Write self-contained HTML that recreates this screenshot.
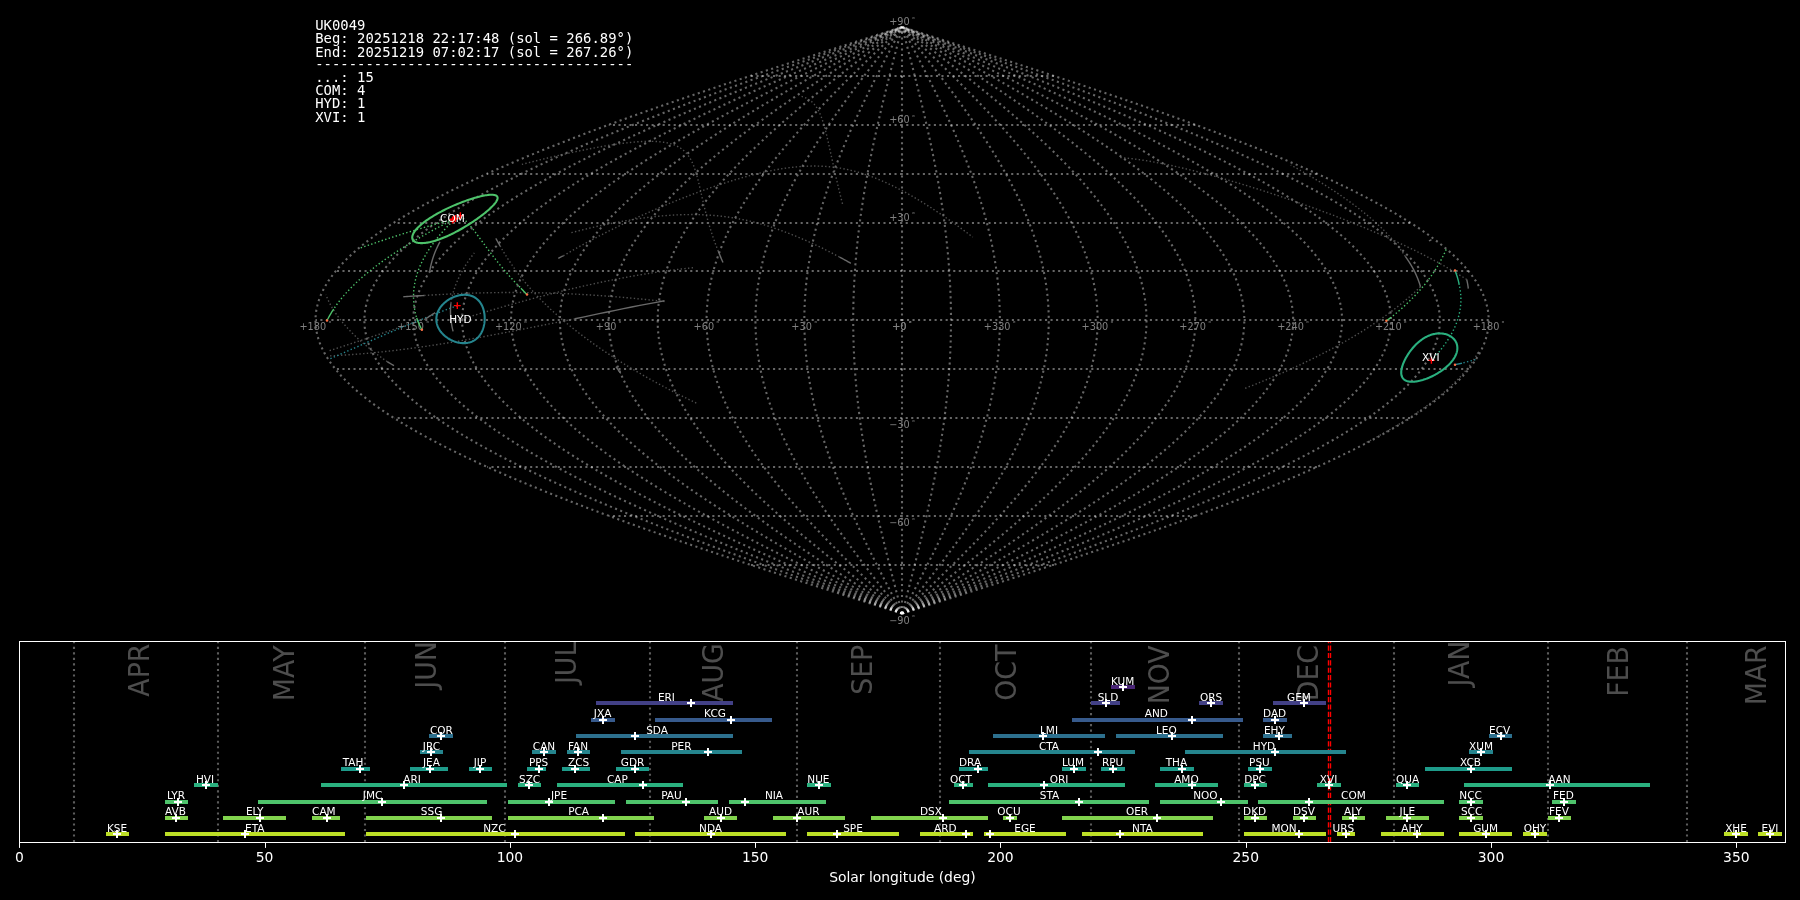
<!DOCTYPE html>
<html lang="en"><head><meta charset="utf-8"><title>UK0049 shower association</title>
<style>
html,body{margin:0;padding:0;background:#000;}
body{width:1800px;height:900px;overflow:hidden;}
svg{display:block;}
text{font-family:"DejaVu Sans","Liberation Sans",sans-serif;}
.mono{font-family:"DejaVu Sans Mono","Liberation Mono",monospace;font-size:13.89px;fill:#fff;white-space:pre;letter-spacing:.019px;}
.grid{fill:none;stroke:#fff;stroke-opacity:.4;stroke-width:2.083;stroke-dasharray:2.083 3.4375;}
.gl{font-size:9.72px;fill:#808080;text-anchor:middle;}
.gc{fill:none;stroke-width:1.389;stroke-dasharray:1.389 2.292;}
.met{fill:none;stroke-width:1.389;}
.sl{font-size:10.5px;fill:#fff;text-anchor:middle;}
.bl{font-size:10.5px;fill:#fff;text-anchor:middle;}
.bar{fill:none;stroke-width:4;}
.pk{fill:none;stroke:#fff;stroke-width:2;}
.mon{font-size:27.78px;fill:#fff;fill-opacity:.3;}
.ml{fill:none;stroke:#fff;stroke-opacity:.36;stroke-width:2.083;stroke-dasharray:2.083 3.4375;}
.tk{font-size:13.89px;fill:#fff;text-anchor:middle;}
</style></head><body>
<svg width="1800" height="900" viewBox="0 0 1800 900" style="will-change:transform">
<rect width="1800" height="900" fill="#000"/>
<g class="grid">
<path d="M902.1 565H750.27"/>
<path d="M1053.93 565H902.1"/>
<path d="M902.1 516H608.79"/>
<path d="M1195.41 516H902.1"/>
<path d="M902.1 467H487.3"/>
<path d="M1316.9 467H902.1"/>
<path d="M902.1 418H394.07"/>
<path d="M1410.13 418H902.1"/>
<path d="M902.1 369H335.47"/>
<path d="M1468.73 369H902.1"/>
<path d="M902.1 320H315.48"/>
<path d="M1488.72 320H902.1"/>
<path d="M902.1 271H335.47"/>
<path d="M1468.73 271H902.1"/>
<path d="M902.1 223H394.07"/>
<path d="M1410.13 223H902.1"/>
<path d="M902.1 174H487.3"/>
<path d="M1316.9 174H902.1"/>
<path d="M902.1 125H608.79"/>
<path d="M1195.41 125H902.1"/>
<path d="M902.1 76H750.27"/>
<path d="M1053.93 76H902.1"/>
<path d="M902 613.61V26.99"/>
<path d="M902.1 613.61 L901.25 610.35 L900.39 607.09 L899.54 603.83 L898.69 600.57 L897.84 597.32 L896.99 594.06 L896.14 590.8 L895.3 587.54 L894.45 584.28 L893.61 581.02 L892.77 577.76 L891.94 574.5 L891.1 571.24 L890.27 567.98 L889.45 564.73 L888.63 561.47 L887.81 558.21 L886.99 554.95 L886.18 551.69 L885.38 548.43 L884.58 545.17 L883.79 541.91 L883 538.65 L882.22 535.39 L881.44 532.13 L880.67 528.88 L879.91 525.62 L879.15 522.36 L878.4 519.1 L877.66 515.84 L876.92 512.58 L876.19 509.32 L875.48 506.06 L874.76 502.8 L874.06 499.55 L873.37 496.29 L872.68 493.03 L872 489.77 L871.34 486.51 L870.68 483.25 L870.03 479.99 L869.39 476.73 L868.76 473.47 L868.14 470.21 L867.53 466.96 L866.94 463.7 L866.35 460.44 L865.77 457.18 L865.21 453.92 L864.65 450.66 L864.11 447.4 L863.58 444.14 L863.06 440.88 L862.55 437.62 L862.06 434.37 L861.57 431.11 L861.1 427.85 L860.64 424.59 L860.2 421.33 L859.76 418.07 L859.34 414.81 L858.94 411.55 L858.54 408.29 L858.16 405.03 L857.8 401.77 L857.44 398.52 L857.1 395.26 L856.77 392 L856.46 388.74 L856.16 385.48 L855.88 382.22 L855.61 378.96 L855.35 375.7 L855.11 372.44 L854.88 369.19 L854.67 365.93 L854.47 362.67 L854.28 359.41 L854.11 356.15 L853.96 352.89 L853.82 349.63 L853.69 346.37 L853.58 343.11 L853.48 339.85 L853.4 336.6 L853.33 333.34 L853.28 330.08 L853.24 326.82 L853.22 323.56 L853.22 320.3 L853.22 317.04 L853.24 313.78 L853.28 310.52 L853.33 307.26 L853.4 304 L853.48 300.75 L853.58 297.49 L853.69 294.23 L853.82 290.97 L853.96 287.71 L854.11 284.45 L854.28 281.19 L854.47 277.93 L854.67 274.67 L854.88 271.42 L855.11 268.16 L855.35 264.9 L855.61 261.64 L855.88 258.38 L856.16 255.12 L856.46 251.86 L856.77 248.6 L857.1 245.34 L857.44 242.08 L857.8 238.83 L858.16 235.57 L858.54 232.31 L858.94 229.05 L859.34 225.79 L859.76 222.53 L860.2 219.27 L860.64 216.01 L861.1 212.75 L861.57 209.49 L862.06 206.24 L862.55 202.98 L863.06 199.72 L863.58 196.46 L864.11 193.2 L864.65 189.94 L865.21 186.68 L865.77 183.42 L866.35 180.16 L866.94 176.9 L867.53 173.65 L868.14 170.39 L868.76 167.13 L869.39 163.87 L870.03 160.61 L870.68 157.35 L871.34 154.09 L872 150.83 L872.68 147.57 L873.37 144.31 L874.06 141.06 L874.76 137.8 L875.48 134.54 L876.19 131.28 L876.92 128.02 L877.66 124.76 L878.4 121.5 L879.15 118.24 L879.91 114.98 L880.67 111.72 L881.44 108.47 L882.22 105.21 L883 101.95 L883.79 98.69 L884.58 95.43 L885.38 92.17 L886.18 88.91 L886.99 85.65 L887.81 82.39 L888.63 79.13 L889.45 75.88 L890.27 72.62 L891.1 69.36 L891.94 66.1 L892.77 62.84 L893.61 59.58 L894.45 56.32 L895.3 53.06 L896.14 49.8 L896.99 46.54 L897.84 43.29 L898.69 40.03 L899.54 36.77 L900.39 33.51 L901.25 30.25 L902.1 26.99"/>
<path d="M902.1 613.61 L900.39 610.35 L898.69 607.09 L896.98 603.83 L895.28 600.57 L893.58 597.32 L891.88 594.06 L890.18 590.8 L888.49 587.54 L886.81 584.28 L885.12 581.02 L883.44 577.76 L881.77 574.5 L880.11 571.24 L878.45 567.98 L876.8 564.73 L875.15 561.47 L873.51 558.21 L871.89 554.95 L870.27 551.69 L868.66 548.43 L867.06 545.17 L865.47 541.91 L863.9 538.65 L862.33 535.39 L860.78 532.13 L859.24 528.88 L857.71 525.62 L856.2 522.36 L854.7 519.1 L853.22 515.84 L851.74 512.58 L850.29 509.32 L848.85 506.06 L847.43 502.8 L846.02 499.55 L844.63 496.29 L843.26 493.03 L841.91 489.77 L840.57 486.51 L839.25 483.25 L837.96 479.99 L836.68 476.73 L835.42 473.47 L834.18 470.21 L832.97 466.96 L831.77 463.7 L830.6 460.44 L829.44 457.18 L828.31 453.92 L827.2 450.66 L826.12 447.4 L825.06 444.14 L824.02 440.88 L823 437.62 L822.01 434.37 L821.04 431.11 L820.1 427.85 L819.19 424.59 L818.29 421.33 L817.43 418.07 L816.59 414.81 L815.77 411.55 L814.99 408.29 L814.22 405.03 L813.49 401.77 L812.78 398.52 L812.1 395.26 L811.45 392 L810.82 388.74 L810.23 385.48 L809.66 382.22 L809.12 378.96 L808.6 375.7 L808.12 372.44 L807.66 369.19 L807.23 365.93 L806.84 362.67 L806.47 359.41 L806.13 356.15 L805.82 352.89 L805.53 349.63 L805.28 346.37 L805.06 343.11 L804.87 339.85 L804.7 336.6 L804.57 333.34 L804.46 330.08 L804.39 326.82 L804.34 323.56 L804.33 320.3 L804.34 317.04 L804.39 313.78 L804.46 310.52 L804.57 307.26 L804.7 304 L804.87 300.75 L805.06 297.49 L805.28 294.23 L805.53 290.97 L805.82 287.71 L806.13 284.45 L806.47 281.19 L806.84 277.93 L807.23 274.67 L807.66 271.42 L808.12 268.16 L808.6 264.9 L809.12 261.64 L809.66 258.38 L810.23 255.12 L810.82 251.86 L811.45 248.6 L812.1 245.34 L812.78 242.08 L813.49 238.83 L814.22 235.57 L814.99 232.31 L815.77 229.05 L816.59 225.79 L817.43 222.53 L818.29 219.27 L819.19 216.01 L820.1 212.75 L821.04 209.49 L822.01 206.24 L823 202.98 L824.02 199.72 L825.06 196.46 L826.12 193.2 L827.2 189.94 L828.31 186.68 L829.44 183.42 L830.6 180.16 L831.77 176.9 L832.97 173.65 L834.18 170.39 L835.42 167.13 L836.68 163.87 L837.96 160.61 L839.25 157.35 L840.57 154.09 L841.91 150.83 L843.26 147.57 L844.63 144.31 L846.02 141.06 L847.43 137.8 L848.85 134.54 L850.29 131.28 L851.74 128.02 L853.22 124.76 L854.7 121.5 L856.2 118.24 L857.71 114.98 L859.24 111.72 L860.78 108.47 L862.33 105.21 L863.9 101.95 L865.47 98.69 L867.06 95.43 L868.66 92.17 L870.27 88.91 L871.89 85.65 L873.51 82.39 L875.15 79.13 L876.8 75.88 L878.45 72.62 L880.11 69.36 L881.77 66.1 L883.44 62.84 L885.12 59.58 L886.81 56.32 L888.49 53.06 L890.18 49.8 L891.88 46.54 L893.58 43.29 L895.28 40.03 L896.98 36.77 L898.69 33.51 L900.39 30.25 L902.1 26.99"/>
<path d="M902.1 613.61 L899.54 610.35 L896.98 607.09 L894.42 603.83 L891.87 600.57 L889.32 597.32 L886.77 594.06 L884.23 590.8 L881.69 587.54 L879.16 584.28 L876.63 581.02 L874.12 577.76 L871.61 574.5 L869.11 571.24 L866.62 567.98 L864.14 564.73 L861.68 561.47 L859.22 558.21 L856.78 554.95 L854.35 551.69 L851.94 548.43 L849.54 545.17 L847.16 541.91 L844.8 538.65 L842.45 535.39 L840.12 532.13 L837.81 528.88 L835.52 525.62 L833.25 522.36 L831 519.1 L828.77 515.84 L826.57 512.58 L824.38 509.32 L822.23 506.06 L820.09 502.8 L817.98 499.55 L815.9 496.29 L813.84 493.03 L811.81 489.77 L809.81 486.51 L807.83 483.25 L805.89 479.99 L803.97 476.73 L802.08 473.47 L800.22 470.21 L798.4 466.96 L796.61 463.7 L794.84 460.44 L793.11 457.18 L791.42 453.92 L789.76 450.66 L788.13 447.4 L786.53 444.14 L784.98 440.88 L783.45 437.62 L781.97 434.37 L780.52 431.11 L779.1 427.85 L777.73 424.59 L776.39 421.33 L775.09 418.07 L773.83 414.81 L772.61 411.55 L771.43 408.29 L770.29 405.03 L769.19 401.77 L768.12 398.52 L767.1 395.26 L766.12 392 L765.19 388.74 L764.29 385.48 L763.43 382.22 L762.62 378.96 L761.85 375.7 L761.13 372.44 L760.44 369.19 L759.8 365.93 L759.2 362.67 L758.65 359.41 L758.14 356.15 L757.67 352.89 L757.25 349.63 L756.87 346.37 L756.54 343.11 L756.25 339.85 L756 336.6 L755.8 333.34 L755.65 330.08 L755.53 326.82 L755.47 323.56 L755.45 320.3 L755.47 317.04 L755.53 313.78 L755.65 310.52 L755.8 307.26 L756 304 L756.25 300.75 L756.54 297.49 L756.87 294.23 L757.25 290.97 L757.67 287.71 L758.14 284.45 L758.65 281.19 L759.2 277.93 L759.8 274.67 L760.44 271.42 L761.13 268.16 L761.85 264.9 L762.62 261.64 L763.43 258.38 L764.29 255.12 L765.19 251.86 L766.12 248.6 L767.1 245.34 L768.12 242.08 L769.19 238.83 L770.29 235.57 L771.43 232.31 L772.61 229.05 L773.83 225.79 L775.09 222.53 L776.39 219.27 L777.73 216.01 L779.1 212.75 L780.52 209.49 L781.97 206.24 L783.45 202.98 L784.98 199.72 L786.53 196.46 L788.13 193.2 L789.76 189.94 L791.42 186.68 L793.11 183.42 L794.84 180.16 L796.61 176.9 L798.4 173.65 L800.22 170.39 L802.08 167.13 L803.97 163.87 L805.89 160.61 L807.83 157.35 L809.81 154.09 L811.81 150.83 L813.84 147.57 L815.9 144.31 L817.98 141.06 L820.09 137.8 L822.23 134.54 L824.38 131.28 L826.57 128.02 L828.77 124.76 L831 121.5 L833.25 118.24 L835.52 114.98 L837.81 111.72 L840.12 108.47 L842.45 105.21 L844.8 101.95 L847.16 98.69 L849.54 95.43 L851.94 92.17 L854.35 88.91 L856.78 85.65 L859.22 82.39 L861.68 79.13 L864.14 75.88 L866.62 72.62 L869.11 69.36 L871.61 66.1 L874.12 62.84 L876.63 59.58 L879.16 56.32 L881.69 53.06 L884.23 49.8 L886.77 46.54 L889.32 43.29 L891.87 40.03 L894.42 36.77 L896.98 33.51 L899.54 30.25 L902.1 26.99"/>
<path d="M902.1 613.61 L898.69 610.35 L895.28 607.09 L891.87 603.83 L888.46 600.57 L885.06 597.32 L881.66 594.06 L878.27 590.8 L874.89 587.54 L871.51 584.28 L868.14 581.02 L864.79 577.76 L861.44 574.5 L858.11 571.24 L854.79 567.98 L851.49 564.73 L848.2 561.47 L844.93 558.21 L841.67 554.95 L838.44 551.69 L835.22 548.43 L832.02 545.17 L828.85 541.91 L825.7 538.65 L822.57 535.39 L819.46 532.13 L816.38 528.88 L813.33 525.62 L810.3 522.36 L807.3 519.1 L804.33 515.84 L801.39 512.58 L798.48 509.32 L795.6 506.06 L792.76 502.8 L789.94 499.55 L787.16 496.29 L784.42 493.03 L781.71 489.77 L779.04 486.51 L776.41 483.25 L773.81 479.99 L771.26 476.73 L768.74 473.47 L766.27 470.21 L763.83 466.96 L761.44 463.7 L759.09 460.44 L756.79 457.18 L754.52 453.92 L752.31 450.66 L750.14 447.4 L748.01 444.14 L745.93 440.88 L743.9 437.62 L741.92 434.37 L739.99 431.11 L738.11 427.85 L736.27 424.59 L734.49 421.33 L732.76 418.07 L731.08 414.81 L729.45 411.55 L727.87 408.29 L726.35 405.03 L724.88 401.77 L723.47 398.52 L722.1 395.26 L720.8 392 L719.55 388.74 L718.35 385.48 L717.21 382.22 L716.13 378.96 L715.1 375.7 L714.13 372.44 L713.22 369.19 L712.37 365.93 L711.57 362.67 L710.83 359.41 L710.15 356.15 L709.53 352.89 L708.97 349.63 L708.46 346.37 L708.02 343.11 L707.63 339.85 L707.3 336.6 L707.04 333.34 L706.83 330.08 L706.68 326.82 L706.59 323.56 L706.56 320.3 L706.59 317.04 L706.68 313.78 L706.83 310.52 L707.04 307.26 L707.3 304 L707.63 300.75 L708.02 297.49 L708.46 294.23 L708.97 290.97 L709.53 287.71 L710.15 284.45 L710.83 281.19 L711.57 277.93 L712.37 274.67 L713.22 271.42 L714.13 268.16 L715.1 264.9 L716.13 261.64 L717.21 258.38 L718.35 255.12 L719.55 251.86 L720.8 248.6 L722.1 245.34 L723.47 242.08 L724.88 238.83 L726.35 235.57 L727.87 232.31 L729.45 229.05 L731.08 225.79 L732.76 222.53 L734.49 219.27 L736.27 216.01 L738.11 212.75 L739.99 209.49 L741.92 206.24 L743.9 202.98 L745.93 199.72 L748.01 196.46 L750.14 193.2 L752.31 189.94 L754.52 186.68 L756.79 183.42 L759.09 180.16 L761.44 176.9 L763.83 173.65 L766.27 170.39 L768.74 167.13 L771.26 163.87 L773.81 160.61 L776.41 157.35 L779.04 154.09 L781.71 150.83 L784.42 147.57 L787.16 144.31 L789.94 141.06 L792.76 137.8 L795.6 134.54 L798.48 131.28 L801.39 128.02 L804.33 124.76 L807.3 121.5 L810.3 118.24 L813.33 114.98 L816.38 111.72 L819.46 108.47 L822.57 105.21 L825.7 101.95 L828.85 98.69 L832.02 95.43 L835.22 92.17 L838.44 88.91 L841.67 85.65 L844.93 82.39 L848.2 79.13 L851.49 75.88 L854.79 72.62 L858.11 69.36 L861.44 66.1 L864.79 62.84 L868.14 59.58 L871.51 56.32 L874.89 53.06 L878.27 49.8 L881.66 46.54 L885.06 43.29 L888.46 40.03 L891.87 36.77 L895.28 33.51 L898.69 30.25 L902.1 26.99"/>
<path d="M902.1 613.61 L897.83 610.35 L893.57 607.09 L889.31 603.83 L885.05 600.57 L880.8 597.32 L876.55 594.06 L872.31 590.8 L868.08 587.54 L863.86 584.28 L859.66 581.02 L855.46 577.76 L851.28 574.5 L847.12 571.24 L842.97 567.98 L838.84 564.73 L834.73 561.47 L830.64 558.21 L826.57 554.95 L822.52 551.69 L818.5 548.43 L814.51 545.17 L810.54 541.91 L806.6 538.65 L802.68 535.39 L798.8 532.13 L794.95 528.88 L791.13 525.62 L787.35 522.36 L783.6 519.1 L779.89 515.84 L776.21 512.58 L772.57 509.32 L768.98 506.06 L765.42 502.8 L761.9 499.55 L758.43 496.29 L755 493.03 L751.62 489.77 L748.28 486.51 L744.99 483.25 L741.74 479.99 L738.55 476.73 L735.4 473.47 L732.31 470.21 L729.27 466.96 L726.28 463.7 L723.34 460.44 L720.46 457.18 L717.63 453.92 L714.86 450.66 L712.15 447.4 L709.49 444.14 L706.89 440.88 L704.36 437.62 L701.88 434.37 L699.46 431.11 L697.11 427.85 L694.82 424.59 L692.59 421.33 L690.42 418.07 L688.32 414.81 L686.29 411.55 L684.32 408.29 L682.41 405.03 L680.58 401.77 L678.81 398.52 L677.11 395.26 L675.47 392 L673.91 388.74 L672.42 385.48 L670.99 382.22 L669.64 378.96 L668.36 375.7 L667.14 372.44 L666 369.19 L664.94 365.93 L663.94 362.67 L663.02 359.41 L662.17 356.15 L661.39 352.89 L660.68 349.63 L660.05 346.37 L659.5 343.11 L659.01 339.85 L658.61 336.6 L658.27 333.34 L658.01 330.08 L657.82 326.82 L657.71 323.56 L657.68 320.3 L657.71 317.04 L657.82 313.78 L658.01 310.52 L658.27 307.26 L658.61 304 L659.01 300.75 L659.5 297.49 L660.05 294.23 L660.68 290.97 L661.39 287.71 L662.17 284.45 L663.02 281.19 L663.94 277.93 L664.94 274.67 L666 271.42 L667.14 268.16 L668.36 264.9 L669.64 261.64 L670.99 258.38 L672.42 255.12 L673.91 251.86 L675.47 248.6 L677.11 245.34 L678.81 242.08 L680.58 238.83 L682.41 235.57 L684.32 232.31 L686.29 229.05 L688.32 225.79 L690.42 222.53 L692.59 219.27 L694.82 216.01 L697.11 212.75 L699.46 209.49 L701.88 206.24 L704.36 202.98 L706.89 199.72 L709.49 196.46 L712.15 193.2 L714.86 189.94 L717.63 186.68 L720.46 183.42 L723.34 180.16 L726.28 176.9 L729.27 173.65 L732.31 170.39 L735.4 167.13 L738.55 163.87 L741.74 160.61 L744.99 157.35 L748.28 154.09 L751.62 150.83 L755 147.57 L758.43 144.31 L761.9 141.06 L765.42 137.8 L768.98 134.54 L772.57 131.28 L776.21 128.02 L779.89 124.76 L783.6 121.5 L787.35 118.24 L791.13 114.98 L794.95 111.72 L798.8 108.47 L802.68 105.21 L806.6 101.95 L810.54 98.69 L814.51 95.43 L818.5 92.17 L822.52 88.91 L826.57 85.65 L830.64 82.39 L834.73 79.13 L838.84 75.88 L842.97 72.62 L847.12 69.36 L851.28 66.1 L855.46 62.84 L859.66 59.58 L863.86 56.32 L868.08 53.06 L872.31 49.8 L876.55 46.54 L880.8 43.29 L885.05 40.03 L889.31 36.77 L893.57 33.51 L897.83 30.25 L902.1 26.99"/>
<path d="M902.1 613.61 L896.98 610.35 L891.86 607.09 L886.75 603.83 L881.64 600.57 L876.54 597.32 L871.44 594.06 L866.35 590.8 L861.28 587.54 L856.22 584.28 L851.17 581.02 L846.13 577.76 L841.12 574.5 L836.12 571.24 L831.14 567.98 L826.19 564.73 L821.25 561.47 L816.34 558.21 L811.46 554.95 L806.61 551.69 L801.78 548.43 L796.99 545.17 L792.22 541.91 L787.49 538.65 L782.8 535.39 L778.14 532.13 L773.52 528.88 L768.94 525.62 L764.4 522.36 L759.9 519.1 L755.44 515.84 L751.03 512.58 L746.67 509.32 L742.35 506.06 L738.08 502.8 L733.86 499.55 L729.7 496.29 L725.58 493.03 L721.52 489.77 L717.51 486.51 L713.56 483.25 L709.67 479.99 L705.84 476.73 L702.06 473.47 L698.35 470.21 L694.7 466.96 L691.11 463.7 L687.59 460.44 L684.13 457.18 L680.74 453.92 L677.41 450.66 L674.16 447.4 L670.97 444.14 L667.85 440.88 L664.81 437.62 L661.83 434.37 L658.93 431.11 L656.11 427.85 L653.36 424.59 L650.68 421.33 L648.09 418.07 L645.57 414.81 L643.12 411.55 L640.76 408.29 L638.47 405.03 L636.27 401.77 L634.15 398.52 L632.11 395.26 L630.15 392 L628.27 388.74 L626.48 385.48 L624.77 382.22 L623.15 378.96 L621.61 375.7 L620.15 372.44 L618.78 369.19 L617.5 365.93 L616.31 362.67 L615.2 359.41 L614.18 356.15 L613.25 352.89 L612.4 349.63 L611.64 346.37 L610.98 343.11 L610.4 339.85 L609.91 336.6 L609.5 333.34 L609.19 330.08 L608.97 326.82 L608.83 323.56 L608.79 320.3 L608.83 317.04 L608.97 313.78 L609.19 310.52 L609.5 307.26 L609.91 304 L610.4 300.75 L610.98 297.49 L611.64 294.23 L612.4 290.97 L613.25 287.71 L614.18 284.45 L615.2 281.19 L616.31 277.93 L617.5 274.67 L618.78 271.42 L620.15 268.16 L621.61 264.9 L623.15 261.64 L624.77 258.38 L626.48 255.12 L628.27 251.86 L630.15 248.6 L632.11 245.34 L634.15 242.08 L636.27 238.83 L638.47 235.57 L640.76 232.31 L643.12 229.05 L645.57 225.79 L648.09 222.53 L650.68 219.27 L653.36 216.01 L656.11 212.75 L658.93 209.49 L661.83 206.24 L664.81 202.98 L667.85 199.72 L670.97 196.46 L674.16 193.2 L677.41 189.94 L680.74 186.68 L684.13 183.42 L687.59 180.16 L691.11 176.9 L694.7 173.65 L698.35 170.39 L702.06 167.13 L705.84 163.87 L709.67 160.61 L713.56 157.35 L717.51 154.09 L721.52 150.83 L725.58 147.57 L729.7 144.31 L733.86 141.06 L738.08 137.8 L742.35 134.54 L746.67 131.28 L751.03 128.02 L755.44 124.76 L759.9 121.5 L764.4 118.24 L768.94 114.98 L773.52 111.72 L778.14 108.47 L782.8 105.21 L787.49 101.95 L792.22 98.69 L796.99 95.43 L801.78 92.17 L806.61 88.91 L811.46 85.65 L816.34 82.39 L821.25 79.13 L826.19 75.88 L831.14 72.62 L836.12 69.36 L841.12 66.1 L846.13 62.84 L851.17 59.58 L856.22 56.32 L861.28 53.06 L866.35 49.8 L871.44 46.54 L876.54 43.29 L881.64 40.03 L886.75 36.77 L891.86 33.51 L896.98 30.25 L902.1 26.99"/>
<path d="M902.1 613.61 L896.13 610.35 L890.16 607.09 L884.19 603.83 L878.23 600.57 L872.28 597.32 L866.33 594.06 L860.4 590.8 L854.48 587.54 L848.57 584.28 L842.68 581.02 L836.81 577.76 L830.95 574.5 L825.12 571.24 L819.32 567.98 L813.53 564.73 L807.78 561.47 L802.05 558.21 L796.36 554.95 L790.69 551.69 L785.06 548.43 L779.47 545.17 L773.91 541.91 L768.39 538.65 L762.92 535.39 L757.48 532.13 L752.09 528.88 L746.75 525.62 L741.45 522.36 L736.2 519.1 L731 515.84 L725.86 512.58 L720.76 509.32 L715.73 506.06 L710.75 502.8 L705.83 499.55 L700.96 496.29 L696.16 493.03 L691.42 489.77 L686.75 486.51 L682.14 483.25 L677.6 479.99 L673.13 476.73 L668.72 473.47 L664.39 470.21 L660.13 466.96 L655.95 463.7 L651.83 460.44 L647.8 457.18 L643.84 453.92 L639.96 450.66 L636.16 447.4 L632.45 444.14 L628.81 440.88 L625.26 437.62 L621.79 434.37 L618.41 431.11 L615.11 427.85 L611.9 424.59 L608.78 421.33 L605.75 418.07 L602.81 414.81 L599.96 411.55 L597.2 408.29 L594.54 405.03 L591.97 401.77 L589.49 398.52 L587.11 395.26 L584.82 392 L582.63 388.74 L580.54 385.48 L578.55 382.22 L576.65 378.96 L574.86 375.7 L573.16 372.44 L571.57 369.19 L570.07 365.93 L568.68 362.67 L567.38 359.41 L566.19 356.15 L565.1 352.89 L564.12 349.63 L563.24 346.37 L562.46 343.11 L561.78 339.85 L561.21 336.6 L560.74 333.34 L560.37 330.08 L560.11 326.82 L559.96 323.56 L559.9 320.3 L559.96 317.04 L560.11 313.78 L560.37 310.52 L560.74 307.26 L561.21 304 L561.78 300.75 L562.46 297.49 L563.24 294.23 L564.12 290.97 L565.1 287.71 L566.19 284.45 L567.38 281.19 L568.68 277.93 L570.07 274.67 L571.57 271.42 L573.16 268.16 L574.86 264.9 L576.65 261.64 L578.55 258.38 L580.54 255.12 L582.63 251.86 L584.82 248.6 L587.11 245.34 L589.49 242.08 L591.97 238.83 L594.54 235.57 L597.2 232.31 L599.96 229.05 L602.81 225.79 L605.75 222.53 L608.78 219.27 L611.9 216.01 L615.11 212.75 L618.41 209.49 L621.79 206.24 L625.26 202.98 L628.81 199.72 L632.45 196.46 L636.16 193.2 L639.96 189.94 L643.84 186.68 L647.8 183.42 L651.83 180.16 L655.95 176.9 L660.13 173.65 L664.39 170.39 L668.72 167.13 L673.13 163.87 L677.6 160.61 L682.14 157.35 L686.75 154.09 L691.42 150.83 L696.16 147.57 L700.96 144.31 L705.83 141.06 L710.75 137.8 L715.73 134.54 L720.76 131.28 L725.86 128.02 L731 124.76 L736.2 121.5 L741.45 118.24 L746.75 114.98 L752.09 111.72 L757.48 108.47 L762.92 105.21 L768.39 101.95 L773.91 98.69 L779.47 95.43 L785.06 92.17 L790.69 88.91 L796.36 85.65 L802.05 82.39 L807.78 79.13 L813.53 75.88 L819.32 72.62 L825.12 69.36 L830.95 66.1 L836.81 62.84 L842.68 59.58 L848.57 56.32 L854.48 53.06 L860.4 49.8 L866.33 46.54 L872.28 43.29 L878.23 40.03 L884.19 36.77 L890.16 33.51 L896.13 30.25 L902.1 26.99"/>
<path d="M902.1 613.61 L895.27 610.35 L888.45 607.09 L881.63 603.83 L874.82 600.57 L868.02 597.32 L861.22 594.06 L854.44 590.8 L847.67 587.54 L840.92 584.28 L834.19 581.02 L827.48 577.76 L820.79 574.5 L814.13 571.24 L807.49 567.98 L800.88 564.73 L794.3 561.47 L787.76 558.21 L781.25 554.95 L774.78 551.69 L768.34 548.43 L761.95 545.17 L755.6 541.91 L749.29 538.65 L743.03 535.39 L736.82 532.13 L730.66 528.88 L724.55 525.62 L718.5 522.36 L712.5 519.1 L706.56 515.84 L700.68 512.58 L694.86 509.32 L689.1 506.06 L683.41 502.8 L677.79 499.55 L672.23 496.29 L666.74 493.03 L661.33 489.77 L655.99 486.51 L650.72 483.25 L645.53 479.99 L640.42 476.73 L635.38 473.47 L630.43 470.21 L625.56 466.96 L620.78 463.7 L616.08 460.44 L611.47 457.18 L606.95 453.92 L602.52 450.66 L598.17 447.4 L593.92 444.14 L589.77 440.88 L585.71 437.62 L581.75 434.37 L577.88 431.11 L574.11 427.85 L570.45 424.59 L566.88 421.33 L563.41 418.07 L560.05 414.81 L556.8 411.55 L553.65 408.29 L550.6 405.03 L547.66 401.77 L544.83 398.52 L542.11 395.26 L539.5 392 L537 388.74 L534.61 385.48 L532.33 382.22 L530.16 378.96 L528.11 375.7 L526.17 372.44 L524.35 369.19 L522.64 365.93 L521.04 362.67 L519.57 359.41 L518.21 356.15 L516.96 352.89 L515.83 349.63 L514.83 346.37 L513.94 343.11 L513.16 339.85 L512.51 336.6 L511.97 333.34 L511.56 330.08 L511.26 326.82 L511.08 323.56 L511.02 320.3 L511.08 317.04 L511.26 313.78 L511.56 310.52 L511.97 307.26 L512.51 304 L513.16 300.75 L513.94 297.49 L514.83 294.23 L515.83 290.97 L516.96 287.71 L518.21 284.45 L519.57 281.19 L521.04 277.93 L522.64 274.67 L524.35 271.42 L526.17 268.16 L528.11 264.9 L530.16 261.64 L532.33 258.38 L534.61 255.12 L537 251.86 L539.5 248.6 L542.11 245.34 L544.83 242.08 L547.66 238.83 L550.6 235.57 L553.65 232.31 L556.8 229.05 L560.05 225.79 L563.41 222.53 L566.88 219.27 L570.45 216.01 L574.11 212.75 L577.88 209.49 L581.75 206.24 L585.71 202.98 L589.77 199.72 L593.92 196.46 L598.17 193.2 L602.52 189.94 L606.95 186.68 L611.47 183.42 L616.08 180.16 L620.78 176.9 L625.56 173.65 L630.43 170.39 L635.38 167.13 L640.42 163.87 L645.53 160.61 L650.72 157.35 L655.99 154.09 L661.33 150.83 L666.74 147.57 L672.23 144.31 L677.79 141.06 L683.41 137.8 L689.1 134.54 L694.86 131.28 L700.68 128.02 L706.56 124.76 L712.5 121.5 L718.5 118.24 L724.55 114.98 L730.66 111.72 L736.82 108.47 L743.03 105.21 L749.29 101.95 L755.6 98.69 L761.95 95.43 L768.34 92.17 L774.78 88.91 L781.25 85.65 L787.76 82.39 L794.3 79.13 L800.88 75.88 L807.49 72.62 L814.13 69.36 L820.79 66.1 L827.48 62.84 L834.19 59.58 L840.92 56.32 L847.67 53.06 L854.44 49.8 L861.22 46.54 L868.02 43.29 L874.82 40.03 L881.63 36.77 L888.45 33.51 L895.27 30.25 L902.1 26.99"/>
<path d="M902.1 613.61 L894.42 610.35 L886.75 607.09 L879.07 603.83 L871.41 600.57 L863.75 597.32 L856.11 594.06 L848.48 590.8 L840.87 587.54 L833.27 584.28 L825.7 581.02 L818.15 577.76 L810.63 574.5 L803.13 571.24 L795.66 567.98 L788.23 564.73 L780.83 561.47 L773.47 558.21 L766.14 554.95 L758.86 551.69 L751.62 548.43 L744.43 545.17 L737.29 541.91 L730.19 538.65 L723.15 535.39 L716.16 532.13 L709.23 528.88 L702.36 525.62 L695.55 522.36 L688.8 519.1 L682.12 515.84 L675.5 512.58 L668.95 509.32 L662.48 506.06 L656.07 502.8 L649.75 499.55 L643.5 496.29 L637.32 493.03 L631.23 489.77 L625.22 486.51 L619.3 483.25 L613.46 479.99 L607.71 476.73 L602.04 473.47 L596.47 470.21 L591 466.96 L585.62 463.7 L580.33 460.44 L575.14 457.18 L570.05 453.92 L565.07 450.66 L560.18 447.4 L555.4 444.14 L550.73 440.88 L546.16 437.62 L541.7 434.37 L537.35 431.11 L533.11 427.85 L528.99 424.59 L524.98 421.33 L521.08 418.07 L517.3 414.81 L513.63 411.55 L510.09 408.29 L506.66 405.03 L503.36 401.77 L500.17 398.52 L497.11 395.26 L494.17 392 L491.36 388.74 L488.67 385.48 L486.1 382.22 L483.67 378.96 L481.36 375.7 L479.18 372.44 L477.13 369.19 L475.2 365.93 L473.41 362.67 L471.75 359.41 L470.22 356.15 L468.82 352.89 L467.55 349.63 L466.42 346.37 L465.41 343.11 L464.55 339.85 L463.81 336.6 L463.21 333.34 L462.74 330.08 L462.4 326.82 L462.2 323.56 L462.14 320.3 L462.2 317.04 L462.4 313.78 L462.74 310.52 L463.21 307.26 L463.81 304 L464.55 300.75 L465.41 297.49 L466.42 294.23 L467.55 290.97 L468.82 287.71 L470.22 284.45 L471.75 281.19 L473.41 277.93 L475.2 274.67 L477.13 271.42 L479.18 268.16 L481.36 264.9 L483.67 261.64 L486.1 258.38 L488.67 255.12 L491.36 251.86 L494.17 248.6 L497.11 245.34 L500.17 242.08 L503.36 238.83 L506.66 235.57 L510.09 232.31 L513.63 229.05 L517.3 225.79 L521.08 222.53 L524.98 219.27 L528.99 216.01 L533.11 212.75 L537.35 209.49 L541.7 206.24 L546.16 202.98 L550.73 199.72 L555.4 196.46 L560.18 193.2 L565.07 189.94 L570.05 186.68 L575.14 183.42 L580.33 180.16 L585.62 176.9 L591 173.65 L596.47 170.39 L602.04 167.13 L607.71 163.87 L613.46 160.61 L619.3 157.35 L625.22 154.09 L631.23 150.83 L637.32 147.57 L643.5 144.31 L649.75 141.06 L656.07 137.8 L662.48 134.54 L668.95 131.28 L675.5 128.02 L682.12 124.76 L688.8 121.5 L695.55 118.24 L702.36 114.98 L709.23 111.72 L716.16 108.47 L723.15 105.21 L730.19 101.95 L737.29 98.69 L744.43 95.43 L751.62 92.17 L758.86 88.91 L766.14 85.65 L773.47 82.39 L780.83 79.13 L788.23 75.88 L795.66 72.62 L803.13 69.36 L810.63 66.1 L818.15 62.84 L825.7 59.58 L833.27 56.32 L840.87 53.06 L848.48 49.8 L856.11 46.54 L863.75 43.29 L871.41 40.03 L879.07 36.77 L886.75 33.51 L894.42 30.25 L902.1 26.99"/>
<path d="M902.1 613.61 L893.57 610.35 L885.04 607.09 L876.52 603.83 L868 600.57 L859.49 597.32 L851 594.06 L842.52 590.8 L834.07 587.54 L825.63 584.28 L817.21 581.02 L808.82 577.76 L800.46 574.5 L792.13 571.24 L783.84 567.98 L775.58 564.73 L767.35 561.47 L759.17 558.21 L751.04 554.95 L742.95 551.69 L734.9 548.43 L726.91 545.17 L718.97 541.91 L711.09 538.65 L703.27 535.39 L695.5 532.13 L687.8 528.88 L680.17 525.62 L672.6 522.36 L665.1 519.1 L657.67 515.84 L650.32 512.58 L643.05 509.32 L635.85 506.06 L628.74 502.8 L621.71 499.55 L614.76 496.29 L607.9 493.03 L601.13 489.77 L594.46 486.51 L587.87 483.25 L581.39 479.99 L575 476.73 L568.71 473.47 L562.52 470.21 L556.43 466.96 L550.45 463.7 L544.58 460.44 L538.81 457.18 L533.16 453.92 L527.62 450.66 L522.19 447.4 L516.88 444.14 L511.69 440.88 L506.61 437.62 L501.66 434.37 L496.82 431.11 L492.12 427.85 L487.53 424.59 L483.07 421.33 L478.74 418.07 L474.54 414.81 L470.47 411.55 L466.53 408.29 L462.72 405.03 L459.05 401.77 L455.51 398.52 L452.11 395.26 L448.85 392 L445.72 388.74 L442.73 385.48 L439.88 382.22 L437.18 378.96 L434.61 375.7 L432.19 372.44 L429.91 369.19 L427.77 365.93 L425.78 362.67 L423.93 359.41 L422.23 356.15 L420.68 352.89 L419.27 349.63 L418.01 346.37 L416.89 343.11 L415.93 339.85 L415.11 336.6 L414.44 333.34 L413.92 330.08 L413.55 326.82 L413.32 323.56 L413.25 320.3 L413.32 317.04 L413.55 313.78 L413.92 310.52 L414.44 307.26 L415.11 304 L415.93 300.75 L416.89 297.49 L418.01 294.23 L419.27 290.97 L420.68 287.71 L422.23 284.45 L423.93 281.19 L425.78 277.93 L427.77 274.67 L429.91 271.42 L432.19 268.16 L434.61 264.9 L437.18 261.64 L439.88 258.38 L442.73 255.12 L445.72 251.86 L448.85 248.6 L452.11 245.34 L455.51 242.08 L459.05 238.83 L462.72 235.57 L466.53 232.31 L470.47 229.05 L474.54 225.79 L478.74 222.53 L483.07 219.27 L487.53 216.01 L492.12 212.75 L496.82 209.49 L501.66 206.24 L506.61 202.98 L511.69 199.72 L516.88 196.46 L522.19 193.2 L527.62 189.94 L533.16 186.68 L538.81 183.42 L544.58 180.16 L550.45 176.9 L556.43 173.65 L562.52 170.39 L568.71 167.13 L575 163.87 L581.39 160.61 L587.87 157.35 L594.46 154.09 L601.13 150.83 L607.9 147.57 L614.76 144.31 L621.71 141.06 L628.74 137.8 L635.85 134.54 L643.05 131.28 L650.32 128.02 L657.67 124.76 L665.1 121.5 L672.6 118.24 L680.17 114.98 L687.8 111.72 L695.5 108.47 L703.27 105.21 L711.09 101.95 L718.97 98.69 L726.91 95.43 L734.9 92.17 L742.95 88.91 L751.04 85.65 L759.17 82.39 L767.35 79.13 L775.58 75.88 L783.84 72.62 L792.13 69.36 L800.46 66.1 L808.82 62.84 L817.21 59.58 L825.63 56.32 L834.07 53.06 L842.52 49.8 L851 46.54 L859.49 43.29 L868 40.03 L876.52 36.77 L885.04 33.51 L893.57 30.25 L902.1 26.99"/>
<path d="M902.1 613.61 L892.72 610.35 L883.33 607.09 L873.96 603.83 L864.59 600.57 L855.23 597.32 L845.89 594.06 L836.57 590.8 L827.26 587.54 L817.98 584.28 L808.72 581.02 L799.5 577.76 L790.3 574.5 L781.14 571.24 L772.01 567.98 L762.92 564.73 L753.88 561.47 L744.88 558.21 L735.93 554.95 L727.03 551.69 L718.18 548.43 L709.39 545.17 L700.66 541.91 L691.99 538.65 L683.38 535.39 L674.84 532.13 L666.37 528.88 L657.97 525.62 L649.65 522.36 L641.4 519.1 L633.23 515.84 L625.15 512.58 L617.14 509.32 L609.23 506.06 L601.4 502.8 L593.67 499.55 L586.03 496.29 L578.48 493.03 L571.04 489.77 L563.69 486.51 L556.45 483.25 L549.31 479.99 L542.29 476.73 L535.37 473.47 L528.56 470.21 L521.86 466.96 L515.29 463.7 L508.83 460.44 L502.49 457.18 L496.27 453.92 L490.17 450.66 L484.2 447.4 L478.36 444.14 L472.65 440.88 L467.06 437.62 L461.61 434.37 L456.3 431.11 L451.12 427.85 L446.07 424.59 L441.17 421.33 L436.41 418.07 L431.79 414.81 L427.31 411.55 L422.97 408.29 L418.79 405.03 L414.75 401.77 L410.85 398.52 L407.11 395.26 L403.52 392 L400.08 388.74 L396.79 385.48 L393.66 382.22 L390.68 378.96 L387.86 375.7 L385.2 372.44 L382.69 369.19 L380.34 365.93 L378.15 362.67 L376.12 359.41 L374.24 356.15 L372.53 352.89 L370.99 349.63 L369.6 346.37 L368.37 343.11 L367.31 339.85 L366.41 336.6 L365.67 333.34 L365.1 330.08 L364.69 326.82 L364.45 323.56 L364.37 320.3 L364.45 317.04 L364.69 313.78 L365.1 310.52 L365.67 307.26 L366.41 304 L367.31 300.75 L368.37 297.49 L369.6 294.23 L370.99 290.97 L372.53 287.71 L374.24 284.45 L376.12 281.19 L378.15 277.93 L380.34 274.67 L382.69 271.42 L385.2 268.16 L387.86 264.9 L390.68 261.64 L393.66 258.38 L396.79 255.12 L400.08 251.86 L403.52 248.6 L407.11 245.34 L410.85 242.08 L414.75 238.83 L418.79 235.57 L422.97 232.31 L427.31 229.05 L431.79 225.79 L436.41 222.53 L441.17 219.27 L446.07 216.01 L451.12 212.75 L456.3 209.49 L461.61 206.24 L467.06 202.98 L472.65 199.72 L478.36 196.46 L484.2 193.2 L490.17 189.94 L496.27 186.68 L502.49 183.42 L508.83 180.16 L515.29 176.9 L521.86 173.65 L528.56 170.39 L535.37 167.13 L542.29 163.87 L549.31 160.61 L556.45 157.35 L563.69 154.09 L571.04 150.83 L578.48 147.57 L586.03 144.31 L593.67 141.06 L601.4 137.8 L609.23 134.54 L617.14 131.28 L625.15 128.02 L633.23 124.76 L641.4 121.5 L649.65 118.24 L657.97 114.98 L666.37 111.72 L674.84 108.47 L683.38 105.21 L691.99 101.95 L700.66 98.69 L709.39 95.43 L718.18 92.17 L727.03 88.91 L735.93 85.65 L744.88 82.39 L753.88 79.13 L762.92 75.88 L772.01 72.62 L781.14 69.36 L790.3 66.1 L799.5 62.84 L808.72 59.58 L817.98 56.32 L827.26 53.06 L836.57 49.8 L845.89 46.54 L855.23 43.29 L864.59 40.03 L873.96 36.77 L883.33 33.51 L892.72 30.25 L902.1 26.99"/>
<path d="M902.1 613.61 L891.86 610.35 L881.63 607.09 L871.4 603.83 L861.18 600.57 L850.97 597.32 L840.78 594.06 L830.61 590.8 L820.46 587.54 L810.33 584.28 L800.23 581.02 L790.17 577.76 L780.13 574.5 L770.14 571.24 L760.18 567.98 L750.27 564.73 L740.41 561.47 L730.59 558.21 L720.82 554.95 L711.12 551.69 L701.46 548.43 L691.87 545.17 L682.35 541.91 L672.89 538.65 L663.5 535.39 L654.18 532.13 L644.94 528.88 L635.78 525.62 L626.7 522.36 L617.7 519.1 L608.79 515.84 L599.97 512.58 L591.24 509.32 L582.6 506.06 L574.07 502.8 L565.63 499.55 L557.29 496.29 L549.06 493.03 L540.94 489.77 L532.93 486.51 L525.03 483.25 L517.24 479.99 L509.57 476.73 L502.03 473.47 L494.6 470.21 L487.3 466.96 L480.12 463.7 L473.07 460.44 L466.16 457.18 L459.37 453.92 L452.72 450.66 L446.21 447.4 L439.84 444.14 L433.6 440.88 L427.51 437.62 L421.57 434.37 L415.77 431.11 L410.12 427.85 L404.62 424.59 L399.27 421.33 L394.07 418.07 L389.03 414.81 L384.15 411.55 L379.42 408.29 L374.85 405.03 L370.44 401.77 L366.2 398.52 L362.11 395.26 L358.2 392 L354.44 388.74 L350.86 385.48 L347.44 382.22 L344.19 378.96 L341.11 375.7 L338.2 372.44 L335.47 369.19 L332.91 365.93 L330.52 362.67 L328.3 359.41 L326.26 356.15 L324.39 352.89 L322.7 349.63 L321.19 346.37 L319.85 343.11 L318.69 339.85 L317.71 336.6 L316.91 333.34 L316.28 330.08 L315.84 326.82 L315.57 323.56 L315.48 320.3 L315.57 317.04 L315.84 313.78 L316.28 310.52 L316.91 307.26 L317.71 304 L318.69 300.75 L319.85 297.49 L321.19 294.23 L322.7 290.97 L324.39 287.71 L326.26 284.45 L328.3 281.19 L330.52 277.93 L332.91 274.67 L335.47 271.42 L338.2 268.16 L341.11 264.9 L344.19 261.64 L347.44 258.38 L350.86 255.12 L354.44 251.86 L358.2 248.6 L362.11 245.34 L366.2 242.08 L370.44 238.83 L374.85 235.57 L379.42 232.31 L384.15 229.05 L389.03 225.79 L394.07 222.53 L399.27 219.27 L404.62 216.01 L410.12 212.75 L415.77 209.49 L421.57 206.24 L427.51 202.98 L433.6 199.72 L439.84 196.46 L446.21 193.2 L452.72 189.94 L459.37 186.68 L466.16 183.42 L473.07 180.16 L480.12 176.9 L487.3 173.65 L494.6 170.39 L502.03 167.13 L509.57 163.87 L517.24 160.61 L525.03 157.35 L532.93 154.09 L540.94 150.83 L549.06 147.57 L557.29 144.31 L565.63 141.06 L574.07 137.8 L582.6 134.54 L591.24 131.28 L599.97 128.02 L608.79 124.76 L617.7 121.5 L626.7 118.24 L635.78 114.98 L644.94 111.72 L654.18 108.47 L663.5 105.21 L672.89 101.95 L682.35 98.69 L691.87 95.43 L701.46 92.17 L711.12 88.91 L720.82 85.65 L730.59 82.39 L740.41 79.13 L750.27 75.88 L760.18 72.62 L770.14 69.36 L780.13 66.1 L790.17 62.84 L800.23 59.58 L810.33 56.32 L820.46 53.06 L830.61 49.8 L840.78 46.54 L850.97 43.29 L861.18 40.03 L871.4 36.77 L881.63 33.51 L891.86 30.25 L902.1 26.99"/>
<path d="M902.1 613.61 L911.48 610.35 L920.87 607.09 L930.24 603.83 L939.61 600.57 L948.97 597.32 L958.31 594.06 L967.63 590.8 L976.94 587.54 L986.22 584.28 L995.48 581.02 L1004.7 577.76 L1013.9 574.5 L1023.06 571.24 L1032.19 567.98 L1041.28 564.73 L1050.32 561.47 L1059.32 558.21 L1068.27 554.95 L1077.17 551.69 L1086.02 548.43 L1094.81 545.17 L1103.54 541.91 L1112.21 538.65 L1120.82 535.39 L1129.36 532.13 L1137.83 528.88 L1146.23 525.62 L1154.55 522.36 L1162.8 519.1 L1170.97 515.84 L1179.05 512.58 L1187.06 509.32 L1194.97 506.06 L1202.8 502.8 L1210.53 499.55 L1218.17 496.29 L1225.72 493.03 L1233.16 489.77 L1240.51 486.51 L1247.75 483.25 L1254.89 479.99 L1261.91 476.73 L1268.83 473.47 L1275.64 470.21 L1282.34 466.96 L1288.91 463.7 L1295.37 460.44 L1301.71 457.18 L1307.93 453.92 L1314.03 450.66 L1320 447.4 L1325.84 444.14 L1331.55 440.88 L1337.14 437.62 L1342.59 434.37 L1347.9 431.11 L1353.08 427.85 L1358.13 424.59 L1363.03 421.33 L1367.79 418.07 L1372.41 414.81 L1376.89 411.55 L1381.23 408.29 L1385.41 405.03 L1389.45 401.77 L1393.35 398.52 L1397.09 395.26 L1400.68 392 L1404.12 388.74 L1407.41 385.48 L1410.54 382.22 L1413.52 378.96 L1416.34 375.7 L1419 372.44 L1421.51 369.19 L1423.86 365.93 L1426.05 362.67 L1428.08 359.41 L1429.96 356.15 L1431.67 352.89 L1433.21 349.63 L1434.6 346.37 L1435.83 343.11 L1436.89 339.85 L1437.79 336.6 L1438.53 333.34 L1439.1 330.08 L1439.51 326.82 L1439.75 323.56 L1439.84 320.3 L1439.75 317.04 L1439.51 313.78 L1439.1 310.52 L1438.53 307.26 L1437.79 304 L1436.89 300.75 L1435.83 297.49 L1434.6 294.23 L1433.21 290.97 L1431.67 287.71 L1429.96 284.45 L1428.08 281.19 L1426.05 277.93 L1423.86 274.67 L1421.51 271.42 L1419 268.16 L1416.34 264.9 L1413.52 261.64 L1410.54 258.38 L1407.41 255.12 L1404.12 251.86 L1400.68 248.6 L1397.09 245.34 L1393.35 242.08 L1389.45 238.83 L1385.41 235.57 L1381.23 232.31 L1376.89 229.05 L1372.41 225.79 L1367.79 222.53 L1363.03 219.27 L1358.13 216.01 L1353.08 212.75 L1347.9 209.49 L1342.59 206.24 L1337.14 202.98 L1331.55 199.72 L1325.84 196.46 L1320 193.2 L1314.03 189.94 L1307.93 186.68 L1301.71 183.42 L1295.37 180.16 L1288.91 176.9 L1282.34 173.65 L1275.64 170.39 L1268.83 167.13 L1261.91 163.87 L1254.89 160.61 L1247.75 157.35 L1240.51 154.09 L1233.16 150.83 L1225.72 147.57 L1218.17 144.31 L1210.53 141.06 L1202.8 137.8 L1194.97 134.54 L1187.06 131.28 L1179.05 128.02 L1170.97 124.76 L1162.8 121.5 L1154.55 118.24 L1146.23 114.98 L1137.83 111.72 L1129.36 108.47 L1120.82 105.21 L1112.21 101.95 L1103.54 98.69 L1094.81 95.43 L1086.02 92.17 L1077.17 88.91 L1068.27 85.65 L1059.32 82.39 L1050.32 79.13 L1041.28 75.88 L1032.19 72.62 L1023.06 69.36 L1013.9 66.1 L1004.7 62.84 L995.48 59.58 L986.22 56.32 L976.94 53.06 L967.63 49.8 L958.31 46.54 L948.97 43.29 L939.61 40.03 L930.24 36.77 L920.87 33.51 L911.48 30.25 L902.1 26.99"/>
<path d="M902.1 613.61 L910.63 610.35 L919.16 607.09 L927.68 603.83 L936.2 600.57 L944.71 597.32 L953.2 594.06 L961.68 590.8 L970.13 587.54 L978.57 584.28 L986.99 581.02 L995.38 577.76 L1003.74 574.5 L1012.07 571.24 L1020.36 567.98 L1028.62 564.73 L1036.85 561.47 L1045.03 558.21 L1053.16 554.95 L1061.25 551.69 L1069.3 548.43 L1077.29 545.17 L1085.23 541.91 L1093.11 538.65 L1100.93 535.39 L1108.7 532.13 L1116.4 528.88 L1124.03 525.62 L1131.6 522.36 L1139.1 519.1 L1146.53 515.84 L1153.88 512.58 L1161.15 509.32 L1168.35 506.06 L1175.46 502.8 L1182.49 499.55 L1189.44 496.29 L1196.3 493.03 L1203.07 489.77 L1209.74 486.51 L1216.33 483.25 L1222.81 479.99 L1229.2 476.73 L1235.49 473.47 L1241.68 470.21 L1247.77 466.96 L1253.75 463.7 L1259.62 460.44 L1265.39 457.18 L1271.04 453.92 L1276.58 450.66 L1282.01 447.4 L1287.32 444.14 L1292.51 440.88 L1297.59 437.62 L1302.54 434.37 L1307.38 431.11 L1312.08 427.85 L1316.67 424.59 L1321.13 421.33 L1325.46 418.07 L1329.66 414.81 L1333.73 411.55 L1337.67 408.29 L1341.48 405.03 L1345.15 401.77 L1348.69 398.52 L1352.09 395.26 L1355.35 392 L1358.48 388.74 L1361.47 385.48 L1364.32 382.22 L1367.02 378.96 L1369.59 375.7 L1372.01 372.44 L1374.29 369.19 L1376.43 365.93 L1378.42 362.67 L1380.27 359.41 L1381.97 356.15 L1383.52 352.89 L1384.93 349.63 L1386.19 346.37 L1387.31 343.11 L1388.27 339.85 L1389.09 336.6 L1389.76 333.34 L1390.28 330.08 L1390.65 326.82 L1390.88 323.56 L1390.95 320.3 L1390.88 317.04 L1390.65 313.78 L1390.28 310.52 L1389.76 307.26 L1389.09 304 L1388.27 300.75 L1387.31 297.49 L1386.19 294.23 L1384.93 290.97 L1383.52 287.71 L1381.97 284.45 L1380.27 281.19 L1378.42 277.93 L1376.43 274.67 L1374.29 271.42 L1372.01 268.16 L1369.59 264.9 L1367.02 261.64 L1364.32 258.38 L1361.47 255.12 L1358.48 251.86 L1355.35 248.6 L1352.09 245.34 L1348.69 242.08 L1345.15 238.83 L1341.48 235.57 L1337.67 232.31 L1333.73 229.05 L1329.66 225.79 L1325.46 222.53 L1321.13 219.27 L1316.67 216.01 L1312.08 212.75 L1307.38 209.49 L1302.54 206.24 L1297.59 202.98 L1292.51 199.72 L1287.32 196.46 L1282.01 193.2 L1276.58 189.94 L1271.04 186.68 L1265.39 183.42 L1259.62 180.16 L1253.75 176.9 L1247.77 173.65 L1241.68 170.39 L1235.49 167.13 L1229.2 163.87 L1222.81 160.61 L1216.33 157.35 L1209.74 154.09 L1203.07 150.83 L1196.3 147.57 L1189.44 144.31 L1182.49 141.06 L1175.46 137.8 L1168.35 134.54 L1161.15 131.28 L1153.88 128.02 L1146.53 124.76 L1139.1 121.5 L1131.6 118.24 L1124.03 114.98 L1116.4 111.72 L1108.7 108.47 L1100.93 105.21 L1093.11 101.95 L1085.23 98.69 L1077.29 95.43 L1069.3 92.17 L1061.25 88.91 L1053.16 85.65 L1045.03 82.39 L1036.85 79.13 L1028.62 75.88 L1020.36 72.62 L1012.07 69.36 L1003.74 66.1 L995.38 62.84 L986.99 59.58 L978.57 56.32 L970.13 53.06 L961.68 49.8 L953.2 46.54 L944.71 43.29 L936.2 40.03 L927.68 36.77 L919.16 33.51 L910.63 30.25 L902.1 26.99"/>
<path d="M902.1 613.61 L909.78 610.35 L917.45 607.09 L925.13 603.83 L932.79 600.57 L940.45 597.32 L948.09 594.06 L955.72 590.8 L963.33 587.54 L970.93 584.28 L978.5 581.02 L986.05 577.76 L993.57 574.5 L1001.07 571.24 L1008.54 567.98 L1015.97 564.73 L1023.37 561.47 L1030.73 558.21 L1038.06 554.95 L1045.34 551.69 L1052.58 548.43 L1059.77 545.17 L1066.91 541.91 L1074.01 538.65 L1081.05 535.39 L1088.04 532.13 L1094.97 528.88 L1101.84 525.62 L1108.65 522.36 L1115.4 519.1 L1122.08 515.84 L1128.7 512.58 L1135.25 509.32 L1141.72 506.06 L1148.13 502.8 L1154.45 499.55 L1160.7 496.29 L1166.88 493.03 L1172.97 489.77 L1178.98 486.51 L1184.9 483.25 L1190.74 479.99 L1196.49 476.73 L1202.16 473.47 L1207.73 470.21 L1213.2 466.96 L1218.58 463.7 L1223.87 460.44 L1229.06 457.18 L1234.15 453.92 L1239.13 450.66 L1244.02 447.4 L1248.8 444.14 L1253.47 440.88 L1258.04 437.62 L1262.5 434.37 L1266.85 431.11 L1271.09 427.85 L1275.21 424.59 L1279.22 421.33 L1283.12 418.07 L1286.9 414.81 L1290.57 411.55 L1294.11 408.29 L1297.54 405.03 L1300.84 401.77 L1304.03 398.52 L1307.09 395.26 L1310.03 392 L1312.84 388.74 L1315.53 385.48 L1318.1 382.22 L1320.53 378.96 L1322.84 375.7 L1325.02 372.44 L1327.07 369.19 L1329 365.93 L1330.79 362.67 L1332.45 359.41 L1333.98 356.15 L1335.38 352.89 L1336.65 349.63 L1337.78 346.37 L1338.79 343.11 L1339.65 339.85 L1340.39 336.6 L1340.99 333.34 L1341.46 330.08 L1341.8 326.82 L1342 323.56 L1342.07 320.3 L1342 317.04 L1341.8 313.78 L1341.46 310.52 L1340.99 307.26 L1340.39 304 L1339.65 300.75 L1338.79 297.49 L1337.78 294.23 L1336.65 290.97 L1335.38 287.71 L1333.98 284.45 L1332.45 281.19 L1330.79 277.93 L1329 274.67 L1327.07 271.42 L1325.02 268.16 L1322.84 264.9 L1320.53 261.64 L1318.1 258.38 L1315.53 255.12 L1312.84 251.86 L1310.03 248.6 L1307.09 245.34 L1304.03 242.08 L1300.84 238.83 L1297.54 235.57 L1294.11 232.31 L1290.57 229.05 L1286.9 225.79 L1283.12 222.53 L1279.22 219.27 L1275.21 216.01 L1271.09 212.75 L1266.85 209.49 L1262.5 206.24 L1258.04 202.98 L1253.47 199.72 L1248.8 196.46 L1244.02 193.2 L1239.13 189.94 L1234.15 186.68 L1229.06 183.42 L1223.87 180.16 L1218.58 176.9 L1213.2 173.65 L1207.73 170.39 L1202.16 167.13 L1196.49 163.87 L1190.74 160.61 L1184.9 157.35 L1178.98 154.09 L1172.97 150.83 L1166.88 147.57 L1160.7 144.31 L1154.45 141.06 L1148.13 137.8 L1141.72 134.54 L1135.25 131.28 L1128.7 128.02 L1122.08 124.76 L1115.4 121.5 L1108.65 118.24 L1101.84 114.98 L1094.97 111.72 L1088.04 108.47 L1081.05 105.21 L1074.01 101.95 L1066.91 98.69 L1059.77 95.43 L1052.58 92.17 L1045.34 88.91 L1038.06 85.65 L1030.73 82.39 L1023.37 79.13 L1015.97 75.88 L1008.54 72.62 L1001.07 69.36 L993.57 66.1 L986.05 62.84 L978.5 59.58 L970.93 56.32 L963.33 53.06 L955.72 49.8 L948.09 46.54 L940.45 43.29 L932.79 40.03 L925.13 36.77 L917.45 33.51 L909.78 30.25 L902.1 26.99"/>
<path d="M902.1 613.61 L908.93 610.35 L915.75 607.09 L922.57 603.83 L929.38 600.57 L936.18 597.32 L942.98 594.06 L949.76 590.8 L956.53 587.54 L963.28 584.28 L970.01 581.02 L976.72 577.76 L983.41 574.5 L990.07 571.24 L996.71 567.98 L1003.32 564.73 L1009.9 561.47 L1016.44 558.21 L1022.95 554.95 L1029.42 551.69 L1035.86 548.43 L1042.25 545.17 L1048.6 541.91 L1054.91 538.65 L1061.17 535.39 L1067.38 532.13 L1073.54 528.88 L1079.65 525.62 L1085.7 522.36 L1091.7 519.1 L1097.64 515.84 L1103.52 512.58 L1109.34 509.32 L1115.1 506.06 L1120.79 502.8 L1126.41 499.55 L1131.97 496.29 L1137.46 493.03 L1142.87 489.77 L1148.21 486.51 L1153.48 483.25 L1158.67 479.99 L1163.78 476.73 L1168.82 473.47 L1173.77 470.21 L1178.64 466.96 L1183.42 463.7 L1188.12 460.44 L1192.73 457.18 L1197.25 453.92 L1201.68 450.66 L1206.03 447.4 L1210.28 444.14 L1214.43 440.88 L1218.49 437.62 L1222.45 434.37 L1226.32 431.11 L1230.09 427.85 L1233.75 424.59 L1237.32 421.33 L1240.79 418.07 L1244.15 414.81 L1247.4 411.55 L1250.55 408.29 L1253.6 405.03 L1256.54 401.77 L1259.37 398.52 L1262.09 395.26 L1264.7 392 L1267.2 388.74 L1269.59 385.48 L1271.87 382.22 L1274.04 378.96 L1276.09 375.7 L1278.03 372.44 L1279.85 369.19 L1281.56 365.93 L1283.16 362.67 L1284.63 359.41 L1285.99 356.15 L1287.24 352.89 L1288.37 349.63 L1289.37 346.37 L1290.26 343.11 L1291.04 339.85 L1291.69 336.6 L1292.23 333.34 L1292.64 330.08 L1292.94 326.82 L1293.12 323.56 L1293.18 320.3 L1293.12 317.04 L1292.94 313.78 L1292.64 310.52 L1292.23 307.26 L1291.69 304 L1291.04 300.75 L1290.26 297.49 L1289.37 294.23 L1288.37 290.97 L1287.24 287.71 L1285.99 284.45 L1284.63 281.19 L1283.16 277.93 L1281.56 274.67 L1279.85 271.42 L1278.03 268.16 L1276.09 264.9 L1274.04 261.64 L1271.87 258.38 L1269.59 255.12 L1267.2 251.86 L1264.7 248.6 L1262.09 245.34 L1259.37 242.08 L1256.54 238.83 L1253.6 235.57 L1250.55 232.31 L1247.4 229.05 L1244.15 225.79 L1240.79 222.53 L1237.32 219.27 L1233.75 216.01 L1230.09 212.75 L1226.32 209.49 L1222.45 206.24 L1218.49 202.98 L1214.43 199.72 L1210.28 196.46 L1206.03 193.2 L1201.68 189.94 L1197.25 186.68 L1192.73 183.42 L1188.12 180.16 L1183.42 176.9 L1178.64 173.65 L1173.77 170.39 L1168.82 167.13 L1163.78 163.87 L1158.67 160.61 L1153.48 157.35 L1148.21 154.09 L1142.87 150.83 L1137.46 147.57 L1131.97 144.31 L1126.41 141.06 L1120.79 137.8 L1115.1 134.54 L1109.34 131.28 L1103.52 128.02 L1097.64 124.76 L1091.7 121.5 L1085.7 118.24 L1079.65 114.98 L1073.54 111.72 L1067.38 108.47 L1061.17 105.21 L1054.91 101.95 L1048.6 98.69 L1042.25 95.43 L1035.86 92.17 L1029.42 88.91 L1022.95 85.65 L1016.44 82.39 L1009.9 79.13 L1003.32 75.88 L996.71 72.62 L990.07 69.36 L983.41 66.1 L976.72 62.84 L970.01 59.58 L963.28 56.32 L956.53 53.06 L949.76 49.8 L942.98 46.54 L936.18 43.29 L929.38 40.03 L922.57 36.77 L915.75 33.51 L908.93 30.25 L902.1 26.99"/>
<path d="M902.1 613.61 L908.07 610.35 L914.04 607.09 L920.01 603.83 L925.97 600.57 L931.92 597.32 L937.87 594.06 L943.8 590.8 L949.72 587.54 L955.63 584.28 L961.52 581.02 L967.39 577.76 L973.25 574.5 L979.08 571.24 L984.88 567.98 L990.67 564.73 L996.42 561.47 L1002.15 558.21 L1007.84 554.95 L1013.51 551.69 L1019.14 548.43 L1024.73 545.17 L1030.29 541.91 L1035.81 538.65 L1041.28 535.39 L1046.72 532.13 L1052.11 528.88 L1057.45 525.62 L1062.75 522.36 L1068 519.1 L1073.2 515.84 L1078.34 512.58 L1083.44 509.32 L1088.47 506.06 L1093.45 502.8 L1098.37 499.55 L1103.24 496.29 L1108.04 493.03 L1112.78 489.77 L1117.45 486.51 L1122.06 483.25 L1126.6 479.99 L1131.07 476.73 L1135.48 473.47 L1139.81 470.21 L1144.07 466.96 L1148.25 463.7 L1152.37 460.44 L1156.4 457.18 L1160.36 453.92 L1164.24 450.66 L1168.04 447.4 L1171.75 444.14 L1175.39 440.88 L1178.94 437.62 L1182.41 434.37 L1185.79 431.11 L1189.09 427.85 L1192.3 424.59 L1195.42 421.33 L1198.45 418.07 L1201.39 414.81 L1204.24 411.55 L1207 408.29 L1209.66 405.03 L1212.23 401.77 L1214.71 398.52 L1217.09 395.26 L1219.38 392 L1221.57 388.74 L1223.66 385.48 L1225.65 382.22 L1227.55 378.96 L1229.34 375.7 L1231.04 372.44 L1232.63 369.19 L1234.13 365.93 L1235.52 362.67 L1236.82 359.41 L1238.01 356.15 L1239.1 352.89 L1240.08 349.63 L1240.96 346.37 L1241.74 343.11 L1242.42 339.85 L1242.99 336.6 L1243.46 333.34 L1243.83 330.08 L1244.09 326.82 L1244.24 323.56 L1244.3 320.3 L1244.24 317.04 L1244.09 313.78 L1243.83 310.52 L1243.46 307.26 L1242.99 304 L1242.42 300.75 L1241.74 297.49 L1240.96 294.23 L1240.08 290.97 L1239.1 287.71 L1238.01 284.45 L1236.82 281.19 L1235.52 277.93 L1234.13 274.67 L1232.63 271.42 L1231.04 268.16 L1229.34 264.9 L1227.55 261.64 L1225.65 258.38 L1223.66 255.12 L1221.57 251.86 L1219.38 248.6 L1217.09 245.34 L1214.71 242.08 L1212.23 238.83 L1209.66 235.57 L1207 232.31 L1204.24 229.05 L1201.39 225.79 L1198.45 222.53 L1195.42 219.27 L1192.3 216.01 L1189.09 212.75 L1185.79 209.49 L1182.41 206.24 L1178.94 202.98 L1175.39 199.72 L1171.75 196.46 L1168.04 193.2 L1164.24 189.94 L1160.36 186.68 L1156.4 183.42 L1152.37 180.16 L1148.25 176.9 L1144.07 173.65 L1139.81 170.39 L1135.48 167.13 L1131.07 163.87 L1126.6 160.61 L1122.06 157.35 L1117.45 154.09 L1112.78 150.83 L1108.04 147.57 L1103.24 144.31 L1098.37 141.06 L1093.45 137.8 L1088.47 134.54 L1083.44 131.28 L1078.34 128.02 L1073.2 124.76 L1068 121.5 L1062.75 118.24 L1057.45 114.98 L1052.11 111.72 L1046.72 108.47 L1041.28 105.21 L1035.81 101.95 L1030.29 98.69 L1024.73 95.43 L1019.14 92.17 L1013.51 88.91 L1007.84 85.65 L1002.15 82.39 L996.42 79.13 L990.67 75.88 L984.88 72.62 L979.08 69.36 L973.25 66.1 L967.39 62.84 L961.52 59.58 L955.63 56.32 L949.72 53.06 L943.8 49.8 L937.87 46.54 L931.92 43.29 L925.97 40.03 L920.01 36.77 L914.04 33.51 L908.07 30.25 L902.1 26.99"/>
<path d="M902.1 613.61 L907.22 610.35 L912.34 607.09 L917.45 603.83 L922.56 600.57 L927.66 597.32 L932.76 594.06 L937.85 590.8 L942.92 587.54 L947.98 584.28 L953.03 581.02 L958.07 577.76 L963.08 574.5 L968.08 571.24 L973.06 567.98 L978.01 564.73 L982.95 561.47 L987.86 558.21 L992.74 554.95 L997.59 551.69 L1002.42 548.43 L1007.21 545.17 L1011.98 541.91 L1016.71 538.65 L1021.4 535.39 L1026.06 532.13 L1030.68 528.88 L1035.26 525.62 L1039.8 522.36 L1044.3 519.1 L1048.76 515.84 L1053.17 512.58 L1057.53 509.32 L1061.85 506.06 L1066.12 502.8 L1070.34 499.55 L1074.5 496.29 L1078.62 493.03 L1082.68 489.77 L1086.69 486.51 L1090.64 483.25 L1094.53 479.99 L1098.36 476.73 L1102.14 473.47 L1105.85 470.21 L1109.5 466.96 L1113.09 463.7 L1116.61 460.44 L1120.07 457.18 L1123.46 453.92 L1126.79 450.66 L1130.04 447.4 L1133.23 444.14 L1136.35 440.88 L1139.39 437.62 L1142.37 434.37 L1145.27 431.11 L1148.09 427.85 L1150.84 424.59 L1153.52 421.33 L1156.11 418.07 L1158.63 414.81 L1161.08 411.55 L1163.44 408.29 L1165.73 405.03 L1167.93 401.77 L1170.05 398.52 L1172.09 395.26 L1174.05 392 L1175.93 388.74 L1177.72 385.48 L1179.43 382.22 L1181.05 378.96 L1182.59 375.7 L1184.05 372.44 L1185.42 369.19 L1186.7 365.93 L1187.89 362.67 L1189 359.41 L1190.02 356.15 L1190.95 352.89 L1191.8 349.63 L1192.56 346.37 L1193.22 343.11 L1193.8 339.85 L1194.29 336.6 L1194.7 333.34 L1195.01 330.08 L1195.23 326.82 L1195.37 323.56 L1195.41 320.3 L1195.37 317.04 L1195.23 313.78 L1195.01 310.52 L1194.7 307.26 L1194.29 304 L1193.8 300.75 L1193.22 297.49 L1192.56 294.23 L1191.8 290.97 L1190.95 287.71 L1190.02 284.45 L1189 281.19 L1187.89 277.93 L1186.7 274.67 L1185.42 271.42 L1184.05 268.16 L1182.59 264.9 L1181.05 261.64 L1179.43 258.38 L1177.72 255.12 L1175.93 251.86 L1174.05 248.6 L1172.09 245.34 L1170.05 242.08 L1167.93 238.83 L1165.73 235.57 L1163.44 232.31 L1161.08 229.05 L1158.63 225.79 L1156.11 222.53 L1153.52 219.27 L1150.84 216.01 L1148.09 212.75 L1145.27 209.49 L1142.37 206.24 L1139.39 202.98 L1136.35 199.72 L1133.23 196.46 L1130.04 193.2 L1126.79 189.94 L1123.46 186.68 L1120.07 183.42 L1116.61 180.16 L1113.09 176.9 L1109.5 173.65 L1105.85 170.39 L1102.14 167.13 L1098.36 163.87 L1094.53 160.61 L1090.64 157.35 L1086.69 154.09 L1082.68 150.83 L1078.62 147.57 L1074.5 144.31 L1070.34 141.06 L1066.12 137.8 L1061.85 134.54 L1057.53 131.28 L1053.17 128.02 L1048.76 124.76 L1044.3 121.5 L1039.8 118.24 L1035.26 114.98 L1030.68 111.72 L1026.06 108.47 L1021.4 105.21 L1016.71 101.95 L1011.98 98.69 L1007.21 95.43 L1002.42 92.17 L997.59 88.91 L992.74 85.65 L987.86 82.39 L982.95 79.13 L978.01 75.88 L973.06 72.62 L968.08 69.36 L963.08 66.1 L958.07 62.84 L953.03 59.58 L947.98 56.32 L942.92 53.06 L937.85 49.8 L932.76 46.54 L927.66 43.29 L922.56 40.03 L917.45 36.77 L912.34 33.51 L907.22 30.25 L902.1 26.99"/>
<path d="M902.1 613.61 L906.37 610.35 L910.63 607.09 L914.89 603.83 L919.15 600.57 L923.4 597.32 L927.65 594.06 L931.89 590.8 L936.12 587.54 L940.34 584.28 L944.54 581.02 L948.74 577.76 L952.92 574.5 L957.08 571.24 L961.23 567.98 L965.36 564.73 L969.47 561.47 L973.56 558.21 L977.63 554.95 L981.68 551.69 L985.7 548.43 L989.69 545.17 L993.66 541.91 L997.6 538.65 L1001.52 535.39 L1005.4 532.13 L1009.25 528.88 L1013.07 525.62 L1016.85 522.36 L1020.6 519.1 L1024.31 515.84 L1027.99 512.58 L1031.63 509.32 L1035.22 506.06 L1038.78 502.8 L1042.3 499.55 L1045.77 496.29 L1049.2 493.03 L1052.58 489.77 L1055.92 486.51 L1059.21 483.25 L1062.46 479.99 L1065.65 476.73 L1068.8 473.47 L1071.89 470.21 L1074.93 466.96 L1077.92 463.7 L1080.86 460.44 L1083.74 457.18 L1086.57 453.92 L1089.34 450.66 L1092.05 447.4 L1094.71 444.14 L1097.31 440.88 L1099.84 437.62 L1102.32 434.37 L1104.74 431.11 L1107.09 427.85 L1109.38 424.59 L1111.61 421.33 L1113.78 418.07 L1115.88 414.81 L1117.91 411.55 L1119.88 408.29 L1121.79 405.03 L1123.62 401.77 L1125.39 398.52 L1127.09 395.26 L1128.73 392 L1130.29 388.74 L1131.78 385.48 L1133.21 382.22 L1134.56 378.96 L1135.84 375.7 L1137.06 372.44 L1138.2 369.19 L1139.26 365.93 L1140.26 362.67 L1141.18 359.41 L1142.03 356.15 L1142.81 352.89 L1143.52 349.63 L1144.15 346.37 L1144.7 343.11 L1145.19 339.85 L1145.59 336.6 L1145.93 333.34 L1146.19 330.08 L1146.38 326.82 L1146.49 323.56 L1146.53 320.3 L1146.49 317.04 L1146.38 313.78 L1146.19 310.52 L1145.93 307.26 L1145.59 304 L1145.19 300.75 L1144.7 297.49 L1144.15 294.23 L1143.52 290.97 L1142.81 287.71 L1142.03 284.45 L1141.18 281.19 L1140.26 277.93 L1139.26 274.67 L1138.2 271.42 L1137.06 268.16 L1135.84 264.9 L1134.56 261.64 L1133.21 258.38 L1131.78 255.12 L1130.29 251.86 L1128.73 248.6 L1127.09 245.34 L1125.39 242.08 L1123.62 238.83 L1121.79 235.57 L1119.88 232.31 L1117.91 229.05 L1115.88 225.79 L1113.78 222.53 L1111.61 219.27 L1109.38 216.01 L1107.09 212.75 L1104.74 209.49 L1102.32 206.24 L1099.84 202.98 L1097.31 199.72 L1094.71 196.46 L1092.05 193.2 L1089.34 189.94 L1086.57 186.68 L1083.74 183.42 L1080.86 180.16 L1077.92 176.9 L1074.93 173.65 L1071.89 170.39 L1068.8 167.13 L1065.65 163.87 L1062.46 160.61 L1059.21 157.35 L1055.92 154.09 L1052.58 150.83 L1049.2 147.57 L1045.77 144.31 L1042.3 141.06 L1038.78 137.8 L1035.22 134.54 L1031.63 131.28 L1027.99 128.02 L1024.31 124.76 L1020.6 121.5 L1016.85 118.24 L1013.07 114.98 L1009.25 111.72 L1005.4 108.47 L1001.52 105.21 L997.6 101.95 L993.66 98.69 L989.69 95.43 L985.7 92.17 L981.68 88.91 L977.63 85.65 L973.56 82.39 L969.47 79.13 L965.36 75.88 L961.23 72.62 L957.08 69.36 L952.92 66.1 L948.74 62.84 L944.54 59.58 L940.34 56.32 L936.12 53.06 L931.89 49.8 L927.65 46.54 L923.4 43.29 L919.15 40.03 L914.89 36.77 L910.63 33.51 L906.37 30.25 L902.1 26.99"/>
<path d="M902.1 613.61 L905.51 610.35 L908.92 607.09 L912.33 603.83 L915.74 600.57 L919.14 597.32 L922.54 594.06 L925.93 590.8 L929.31 587.54 L932.69 584.28 L936.06 581.02 L939.41 577.76 L942.76 574.5 L946.09 571.24 L949.41 567.98 L952.71 564.73 L956 561.47 L959.27 558.21 L962.53 554.95 L965.76 551.69 L968.98 548.43 L972.18 545.17 L975.35 541.91 L978.5 538.65 L981.63 535.39 L984.74 532.13 L987.82 528.88 L990.87 525.62 L993.9 522.36 L996.9 519.1 L999.87 515.84 L1002.81 512.58 L1005.72 509.32 L1008.6 506.06 L1011.44 502.8 L1014.26 499.55 L1017.04 496.29 L1019.78 493.03 L1022.49 489.77 L1025.16 486.51 L1027.79 483.25 L1030.39 479.99 L1032.94 476.73 L1035.46 473.47 L1037.93 470.21 L1040.37 466.96 L1042.76 463.7 L1045.11 460.44 L1047.41 457.18 L1049.68 453.92 L1051.89 450.66 L1054.06 447.4 L1056.19 444.14 L1058.27 440.88 L1060.3 437.62 L1062.28 434.37 L1064.21 431.11 L1066.09 427.85 L1067.93 424.59 L1069.71 421.33 L1071.44 418.07 L1073.12 414.81 L1074.75 411.55 L1076.33 408.29 L1077.85 405.03 L1079.32 401.77 L1080.73 398.52 L1082.1 395.26 L1083.4 392 L1084.65 388.74 L1085.85 385.48 L1086.99 382.22 L1088.07 378.96 L1089.1 375.7 L1090.07 372.44 L1090.98 369.19 L1091.83 365.93 L1092.63 362.67 L1093.37 359.41 L1094.05 356.15 L1094.67 352.89 L1095.23 349.63 L1095.74 346.37 L1096.18 343.11 L1096.57 339.85 L1096.9 336.6 L1097.16 333.34 L1097.37 330.08 L1097.52 326.82 L1097.61 323.56 L1097.64 320.3 L1097.61 317.04 L1097.52 313.78 L1097.37 310.52 L1097.16 307.26 L1096.9 304 L1096.57 300.75 L1096.18 297.49 L1095.74 294.23 L1095.23 290.97 L1094.67 287.71 L1094.05 284.45 L1093.37 281.19 L1092.63 277.93 L1091.83 274.67 L1090.98 271.42 L1090.07 268.16 L1089.1 264.9 L1088.07 261.64 L1086.99 258.38 L1085.85 255.12 L1084.65 251.86 L1083.4 248.6 L1082.1 245.34 L1080.73 242.08 L1079.32 238.83 L1077.85 235.57 L1076.33 232.31 L1074.75 229.05 L1073.12 225.79 L1071.44 222.53 L1069.71 219.27 L1067.93 216.01 L1066.09 212.75 L1064.21 209.49 L1062.28 206.24 L1060.3 202.98 L1058.27 199.72 L1056.19 196.46 L1054.06 193.2 L1051.89 189.94 L1049.68 186.68 L1047.41 183.42 L1045.11 180.16 L1042.76 176.9 L1040.37 173.65 L1037.93 170.39 L1035.46 167.13 L1032.94 163.87 L1030.39 160.61 L1027.79 157.35 L1025.16 154.09 L1022.49 150.83 L1019.78 147.57 L1017.04 144.31 L1014.26 141.06 L1011.44 137.8 L1008.6 134.54 L1005.72 131.28 L1002.81 128.02 L999.87 124.76 L996.9 121.5 L993.9 118.24 L990.87 114.98 L987.82 111.72 L984.74 108.47 L981.63 105.21 L978.5 101.95 L975.35 98.69 L972.18 95.43 L968.98 92.17 L965.76 88.91 L962.53 85.65 L959.27 82.39 L956 79.13 L952.71 75.88 L949.41 72.62 L946.09 69.36 L942.76 66.1 L939.41 62.84 L936.06 59.58 L932.69 56.32 L929.31 53.06 L925.93 49.8 L922.54 46.54 L919.14 43.29 L915.74 40.03 L912.33 36.77 L908.92 33.51 L905.51 30.25 L902.1 26.99"/>
<path d="M902.1 613.61 L904.66 610.35 L907.22 607.09 L909.78 603.83 L912.33 600.57 L914.88 597.32 L917.43 594.06 L919.97 590.8 L922.51 587.54 L925.04 584.28 L927.57 581.02 L930.08 577.76 L932.59 574.5 L935.09 571.24 L937.58 567.98 L940.06 564.73 L942.52 561.47 L944.98 558.21 L947.42 554.95 L949.85 551.69 L952.26 548.43 L954.66 545.17 L957.04 541.91 L959.4 538.65 L961.75 535.39 L964.08 532.13 L966.39 528.88 L968.68 525.62 L970.95 522.36 L973.2 519.1 L975.43 515.84 L977.63 512.58 L979.82 509.32 L981.97 506.06 L984.11 502.8 L986.22 499.55 L988.3 496.29 L990.36 493.03 L992.39 489.77 L994.39 486.51 L996.37 483.25 L998.31 479.99 L1000.23 476.73 L1002.12 473.47 L1003.98 470.21 L1005.8 466.96 L1007.59 463.7 L1009.36 460.44 L1011.09 457.18 L1012.78 453.92 L1014.44 450.66 L1016.07 447.4 L1017.67 444.14 L1019.22 440.88 L1020.75 437.62 L1022.23 434.37 L1023.68 431.11 L1025.1 427.85 L1026.47 424.59 L1027.81 421.33 L1029.11 418.07 L1030.37 414.81 L1031.59 411.55 L1032.77 408.29 L1033.91 405.03 L1035.01 401.77 L1036.08 398.52 L1037.1 395.26 L1038.08 392 L1039.01 388.74 L1039.91 385.48 L1040.77 382.22 L1041.58 378.96 L1042.35 375.7 L1043.07 372.44 L1043.76 369.19 L1044.4 365.93 L1045 362.67 L1045.55 359.41 L1046.06 356.15 L1046.53 352.89 L1046.95 349.63 L1047.33 346.37 L1047.66 343.11 L1047.95 339.85 L1048.2 336.6 L1048.4 333.34 L1048.55 330.08 L1048.67 326.82 L1048.73 323.56 L1048.76 320.3 L1048.73 317.04 L1048.67 313.78 L1048.55 310.52 L1048.4 307.26 L1048.2 304 L1047.95 300.75 L1047.66 297.49 L1047.33 294.23 L1046.95 290.97 L1046.53 287.71 L1046.06 284.45 L1045.55 281.19 L1045 277.93 L1044.4 274.67 L1043.76 271.42 L1043.07 268.16 L1042.35 264.9 L1041.58 261.64 L1040.77 258.38 L1039.91 255.12 L1039.01 251.86 L1038.08 248.6 L1037.1 245.34 L1036.08 242.08 L1035.01 238.83 L1033.91 235.57 L1032.77 232.31 L1031.59 229.05 L1030.37 225.79 L1029.11 222.53 L1027.81 219.27 L1026.47 216.01 L1025.1 212.75 L1023.68 209.49 L1022.23 206.24 L1020.75 202.98 L1019.22 199.72 L1017.67 196.46 L1016.07 193.2 L1014.44 189.94 L1012.78 186.68 L1011.09 183.42 L1009.36 180.16 L1007.59 176.9 L1005.8 173.65 L1003.98 170.39 L1002.12 167.13 L1000.23 163.87 L998.31 160.61 L996.37 157.35 L994.39 154.09 L992.39 150.83 L990.36 147.57 L988.3 144.31 L986.22 141.06 L984.11 137.8 L981.97 134.54 L979.82 131.28 L977.63 128.02 L975.43 124.76 L973.2 121.5 L970.95 118.24 L968.68 114.98 L966.39 111.72 L964.08 108.47 L961.75 105.21 L959.4 101.95 L957.04 98.69 L954.66 95.43 L952.26 92.17 L949.85 88.91 L947.42 85.65 L944.98 82.39 L942.52 79.13 L940.06 75.88 L937.58 72.62 L935.09 69.36 L932.59 66.1 L930.08 62.84 L927.57 59.58 L925.04 56.32 L922.51 53.06 L919.97 49.8 L917.43 46.54 L914.88 43.29 L912.33 40.03 L909.78 36.77 L907.22 33.51 L904.66 30.25 L902.1 26.99"/>
<path d="M902.1 613.61 L903.81 610.35 L905.51 607.09 L907.22 603.83 L908.92 600.57 L910.62 597.32 L912.32 594.06 L914.02 590.8 L915.71 587.54 L917.39 584.28 L919.08 581.02 L920.76 577.76 L922.43 574.5 L924.09 571.24 L925.75 567.98 L927.4 564.73 L929.05 561.47 L930.69 558.21 L932.31 554.95 L933.93 551.69 L935.54 548.43 L937.14 545.17 L938.73 541.91 L940.3 538.65 L941.87 535.39 L943.42 532.13 L944.96 528.88 L946.49 525.62 L948 522.36 L949.5 519.1 L950.99 515.84 L952.46 512.58 L953.91 509.32 L955.35 506.06 L956.77 502.8 L958.18 499.55 L959.57 496.29 L960.94 493.03 L962.29 489.77 L963.63 486.51 L964.95 483.25 L966.24 479.99 L967.52 476.73 L968.78 473.47 L970.02 470.21 L971.23 466.96 L972.43 463.7 L973.6 460.44 L974.76 457.18 L975.89 453.92 L977 450.66 L978.08 447.4 L979.14 444.14 L980.18 440.88 L981.2 437.62 L982.19 434.37 L983.16 431.11 L984.1 427.85 L985.01 424.59 L985.91 421.33 L986.77 418.07 L987.61 414.81 L988.43 411.55 L989.21 408.29 L989.98 405.03 L990.71 401.77 L991.42 398.52 L992.1 395.26 L992.75 392 L993.38 388.74 L993.97 385.48 L994.54 382.22 L995.08 378.96 L995.6 375.7 L996.08 372.44 L996.54 369.19 L996.97 365.93 L997.36 362.67 L997.73 359.41 L998.07 356.15 L998.38 352.89 L998.67 349.63 L998.92 346.37 L999.14 343.11 L999.33 339.85 L999.5 336.6 L999.63 333.34 L999.74 330.08 L999.81 326.82 L999.86 323.56 L999.87 320.3 L999.86 317.04 L999.81 313.78 L999.74 310.52 L999.63 307.26 L999.5 304 L999.33 300.75 L999.14 297.49 L998.92 294.23 L998.67 290.97 L998.38 287.71 L998.07 284.45 L997.73 281.19 L997.36 277.93 L996.97 274.67 L996.54 271.42 L996.08 268.16 L995.6 264.9 L995.08 261.64 L994.54 258.38 L993.97 255.12 L993.38 251.86 L992.75 248.6 L992.1 245.34 L991.42 242.08 L990.71 238.83 L989.98 235.57 L989.21 232.31 L988.43 229.05 L987.61 225.79 L986.77 222.53 L985.91 219.27 L985.01 216.01 L984.1 212.75 L983.16 209.49 L982.19 206.24 L981.2 202.98 L980.18 199.72 L979.14 196.46 L978.08 193.2 L977 189.94 L975.89 186.68 L974.76 183.42 L973.6 180.16 L972.43 176.9 L971.23 173.65 L970.02 170.39 L968.78 167.13 L967.52 163.87 L966.24 160.61 L964.95 157.35 L963.63 154.09 L962.29 150.83 L960.94 147.57 L959.57 144.31 L958.18 141.06 L956.77 137.8 L955.35 134.54 L953.91 131.28 L952.46 128.02 L950.99 124.76 L949.5 121.5 L948 118.24 L946.49 114.98 L944.96 111.72 L943.42 108.47 L941.87 105.21 L940.3 101.95 L938.73 98.69 L937.14 95.43 L935.54 92.17 L933.93 88.91 L932.31 85.65 L930.69 82.39 L929.05 79.13 L927.4 75.88 L925.75 72.62 L924.09 69.36 L922.43 66.1 L920.76 62.84 L919.08 59.58 L917.39 56.32 L915.71 53.06 L914.02 49.8 L912.32 46.54 L910.62 43.29 L908.92 40.03 L907.22 36.77 L905.51 33.51 L903.81 30.25 L902.1 26.99"/>
<path d="M902.1 613.61 L902.95 610.35 L903.81 607.09 L904.66 603.83 L905.51 600.57 L906.36 597.32 L907.21 594.06 L908.06 590.8 L908.9 587.54 L909.75 584.28 L910.59 581.02 L911.43 577.76 L912.26 574.5 L913.1 571.24 L913.93 567.98 L914.75 564.73 L915.57 561.47 L916.39 558.21 L917.21 554.95 L918.02 551.69 L918.82 548.43 L919.62 545.17 L920.41 541.91 L921.2 538.65 L921.98 535.39 L922.76 532.13 L923.53 528.88 L924.29 525.62 L925.05 522.36 L925.8 519.1 L926.54 515.84 L927.28 512.58 L928.01 509.32 L928.72 506.06 L929.44 502.8 L930.14 499.55 L930.83 496.29 L931.52 493.03 L932.2 489.77 L932.86 486.51 L933.52 483.25 L934.17 479.99 L934.81 476.73 L935.44 473.47 L936.06 470.21 L936.67 466.96 L937.26 463.7 L937.85 460.44 L938.43 457.18 L938.99 453.92 L939.55 450.66 L940.09 447.4 L940.62 444.14 L941.14 440.88 L941.65 437.62 L942.14 434.37 L942.63 431.11 L943.1 427.85 L943.56 424.59 L944 421.33 L944.44 418.07 L944.86 414.81 L945.26 411.55 L945.66 408.29 L946.04 405.03 L946.4 401.77 L946.76 398.52 L947.1 395.26 L947.43 392 L947.74 388.74 L948.04 385.48 L948.32 382.22 L948.59 378.96 L948.85 375.7 L949.09 372.44 L949.32 369.19 L949.53 365.93 L949.73 362.67 L949.92 359.41 L950.09 356.15 L950.24 352.89 L950.38 349.63 L950.51 346.37 L950.62 343.11 L950.72 339.85 L950.8 336.6 L950.87 333.34 L950.92 330.08 L950.96 326.82 L950.98 323.56 L950.99 320.3 L950.98 317.04 L950.96 313.78 L950.92 310.52 L950.87 307.26 L950.8 304 L950.72 300.75 L950.62 297.49 L950.51 294.23 L950.38 290.97 L950.24 287.71 L950.09 284.45 L949.92 281.19 L949.73 277.93 L949.53 274.67 L949.32 271.42 L949.09 268.16 L948.85 264.9 L948.59 261.64 L948.32 258.38 L948.04 255.12 L947.74 251.86 L947.43 248.6 L947.1 245.34 L946.76 242.08 L946.4 238.83 L946.04 235.57 L945.66 232.31 L945.26 229.05 L944.86 225.79 L944.44 222.53 L944 219.27 L943.56 216.01 L943.1 212.75 L942.63 209.49 L942.14 206.24 L941.65 202.98 L941.14 199.72 L940.62 196.46 L940.09 193.2 L939.55 189.94 L938.99 186.68 L938.43 183.42 L937.85 180.16 L937.26 176.9 L936.67 173.65 L936.06 170.39 L935.44 167.13 L934.81 163.87 L934.17 160.61 L933.52 157.35 L932.86 154.09 L932.2 150.83 L931.52 147.57 L930.83 144.31 L930.14 141.06 L929.44 137.8 L928.72 134.54 L928.01 131.28 L927.28 128.02 L926.54 124.76 L925.8 121.5 L925.05 118.24 L924.29 114.98 L923.53 111.72 L922.76 108.47 L921.98 105.21 L921.2 101.95 L920.41 98.69 L919.62 95.43 L918.82 92.17 L918.02 88.91 L917.21 85.65 L916.39 82.39 L915.57 79.13 L914.75 75.88 L913.93 72.62 L913.1 69.36 L912.26 66.1 L911.43 62.84 L910.59 59.58 L909.75 56.32 L908.9 53.06 L908.06 49.8 L907.21 46.54 L906.36 43.29 L905.51 40.03 L904.66 36.77 L903.81 33.51 L902.95 30.25 L902.1 26.99"/>
<path d="M902.1 613.61 L912.34 610.35 L922.57 607.09 L932.8 603.83 L943.02 600.57 L953.23 597.32 L963.42 594.06 L973.59 590.8 L983.74 587.54 L993.87 584.28 L1003.97 581.02 L1014.03 577.76 L1024.07 574.5 L1034.06 571.24 L1044.02 567.98 L1053.93 564.73 L1063.79 561.47 L1073.61 558.21 L1083.38 554.95 L1093.08 551.69 L1102.74 548.43 L1112.33 545.17 L1121.85 541.91 L1131.31 538.65 L1140.7 535.39 L1150.02 532.13 L1159.26 528.88 L1168.42 525.62 L1177.5 522.36 L1186.5 519.1 L1195.41 515.84 L1204.23 512.58 L1212.96 509.32 L1221.6 506.06 L1230.13 502.8 L1238.57 499.55 L1246.91 496.29 L1255.14 493.03 L1263.26 489.77 L1271.27 486.51 L1279.17 483.25 L1286.96 479.99 L1294.63 476.73 L1302.17 473.47 L1309.6 470.21 L1316.9 466.96 L1324.08 463.7 L1331.13 460.44 L1338.04 457.18 L1344.83 453.92 L1351.48 450.66 L1357.99 447.4 L1364.36 444.14 L1370.6 440.88 L1376.69 437.62 L1382.63 434.37 L1388.43 431.11 L1394.08 427.85 L1399.58 424.59 L1404.93 421.33 L1410.13 418.07 L1415.17 414.81 L1420.05 411.55 L1424.78 408.29 L1429.35 405.03 L1433.76 401.77 L1438 398.52 L1442.09 395.26 L1446 392 L1449.76 388.74 L1453.34 385.48 L1456.76 382.22 L1460.01 378.96 L1463.09 375.7 L1466 372.44 L1468.73 369.19 L1471.29 365.93 L1473.68 362.67 L1475.9 359.41 L1477.94 356.15 L1479.81 352.89 L1481.5 349.63 L1483.01 346.37 L1484.35 343.11 L1485.51 339.85 L1486.49 336.6 L1487.29 333.34 L1487.92 330.08 L1488.36 326.82 L1488.63 323.56 L1488.72 320.3 L1488.63 317.04 L1488.36 313.78 L1487.92 310.52 L1487.29 307.26 L1486.49 304 L1485.51 300.75 L1484.35 297.49 L1483.01 294.23 L1481.5 290.97 L1479.81 287.71 L1477.94 284.45 L1475.9 281.19 L1473.68 277.93 L1471.29 274.67 L1468.73 271.42 L1466 268.16 L1463.09 264.9 L1460.01 261.64 L1456.76 258.38 L1453.34 255.12 L1449.76 251.86 L1446 248.6 L1442.09 245.34 L1438 242.08 L1433.76 238.83 L1429.35 235.57 L1424.78 232.31 L1420.05 229.05 L1415.17 225.79 L1410.13 222.53 L1404.93 219.27 L1399.58 216.01 L1394.08 212.75 L1388.43 209.49 L1382.63 206.24 L1376.69 202.98 L1370.6 199.72 L1364.36 196.46 L1357.99 193.2 L1351.48 189.94 L1344.83 186.68 L1338.04 183.42 L1331.13 180.16 L1324.08 176.9 L1316.9 173.65 L1309.6 170.39 L1302.17 167.13 L1294.63 163.87 L1286.96 160.61 L1279.17 157.35 L1271.27 154.09 L1263.26 150.83 L1255.14 147.57 L1246.91 144.31 L1238.57 141.06 L1230.13 137.8 L1221.6 134.54 L1212.96 131.28 L1204.23 128.02 L1195.41 124.76 L1186.5 121.5 L1177.5 118.24 L1168.42 114.98 L1159.26 111.72 L1150.02 108.47 L1140.7 105.21 L1131.31 101.95 L1121.85 98.69 L1112.33 95.43 L1102.74 92.17 L1093.08 88.91 L1083.38 85.65 L1073.61 82.39 L1063.79 79.13 L1053.93 75.88 L1044.02 72.62 L1034.06 69.36 L1024.07 66.1 L1014.03 62.84 L1003.97 59.58 L993.87 56.32 L983.74 53.06 L973.59 49.8 L963.42 46.54 L953.23 43.29 L943.02 40.03 L932.8 36.77 L922.57 33.51 L912.34 30.25 L902.1 26.99"/>
</g>
<text class="gl" x="902.1" y="624.01">−90<tspan dx="2" dy="-3.6" font-size="6.8px">°</tspan></text>
<text class="gl" x="902.1" y="526.24">−60<tspan dx="2" dy="-3.6" font-size="6.8px">°</tspan></text>
<text class="gl" x="902.1" y="428.47">−30<tspan dx="2" dy="-3.6" font-size="6.8px">°</tspan></text>
<text class="gl" x="902.1" y="329.8">+0<tspan dx="2" dy="-3.6" font-size="6.8px">°</tspan></text>
<text class="gl" x="902.1" y="221.03">+30<tspan dx="2" dy="-3.6" font-size="6.8px">°</tspan></text>
<text class="gl" x="902.1" y="123.26">+60<tspan dx="2" dy="-3.6" font-size="6.8px">°</tspan></text>
<text class="gl" x="902.1" y="25.49">+90<tspan dx="2" dy="-3.6" font-size="6.8px">°</tspan></text>
<text class="gl" x="902.1" y="329.8">+0<tspan dx="2" dy="-3.6" font-size="6.8px">°</tspan></text>
<text class="gl" x="804.33" y="329.8">+30<tspan dx="2" dy="-3.6" font-size="6.8px">°</tspan></text>
<text class="gl" x="706.56" y="329.8">+60<tspan dx="2" dy="-3.6" font-size="6.8px">°</tspan></text>
<text class="gl" x="608.79" y="329.8">+90<tspan dx="2" dy="-3.6" font-size="6.8px">°</tspan></text>
<text class="gl" x="511.02" y="329.8">+120<tspan dx="2" dy="-3.6" font-size="6.8px">°</tspan></text>
<text class="gl" x="413.25" y="329.8">+150<tspan dx="2" dy="-3.6" font-size="6.8px">°</tspan></text>
<text class="gl" x="315.48" y="329.8">+180<tspan dx="2" dy="-3.6" font-size="6.8px">°</tspan></text>
<text class="gl" x="1390.95" y="329.8">+210<tspan dx="2" dy="-3.6" font-size="6.8px">°</tspan></text>
<text class="gl" x="1293.18" y="329.8">+240<tspan dx="2" dy="-3.6" font-size="6.8px">°</tspan></text>
<text class="gl" x="1195.41" y="329.8">+270<tspan dx="2" dy="-3.6" font-size="6.8px">°</tspan></text>
<text class="gl" x="1097.64" y="329.8">+300<tspan dx="2" dy="-3.6" font-size="6.8px">°</tspan></text>
<text class="gl" x="999.87" y="329.8">+330<tspan dx="2" dy="-3.6" font-size="6.8px">°</tspan></text>
<text class="gl" x="1488.72" y="329.8">+180<tspan dx="2" dy="-3.6" font-size="6.8px">°</tspan></text>
<g id="sky">
<path class="gc" stroke="#6a6a6a" stroke-opacity=".75" d="M424.2 295.5 L425.88 295.39 L427.56 295.28 L429.24 295.18 L430.91 295.07 L432.59 294.97 L434.27 294.87 L435.94 294.77 L437.62 294.68 L439.29 294.58 L440.97 294.49 L442.64 294.4 L444.31 294.31 L445.99 294.23 L447.66 294.14 L449.33 294.06 L451 293.98 L452.67 293.9 L454.34 293.83 L456.01 293.75 L457.68 293.68 L459.34 293.61 L461.01 293.55 L462.68 293.48 L464.34 293.42 L466.01 293.36 L467.67 293.3 L469.33 293.24 L471 293.19 L472.66 293.13 L474.32 293.08 L475.98 293.03 L477.64 292.99 L479.3 292.94 L480.96 292.9 L482.62 292.86 L484.27 292.82 L485.93 292.79 L487.59 292.75 L489.24 292.72 L490.9 292.69 L492.55 292.67 L494.2 292.64 L495.86 292.62 L497.51 292.6 L499.16 292.58 L500.81 292.56 L502.46 292.55 L504.11 292.54 L505.76 292.53 L507.4 292.52 L509.05 292.52 L510.7 292.51 L512.34 292.51 L513.99 292.51 L515.63 292.52 L517.27 292.52 L518.92 292.53 L520.56 292.54 L522.2 292.55 L523.84 292.57 L525.48 292.58 L527.12 292.6 L528.76 292.62 L530.4 292.65 L532.04 292.67 L533.67 292.7 L535.31 292.73 L536.94 292.76 L538.58 292.79 L540.21 292.83 L541.85 292.87 L543.48 292.91 L545.11 292.95 L546.75 292.99 L548.38 293.04 L550.01 293.09 L551.64 293.14 L553.27 293.19 L554.9 293.25 L556.53 293.3 L558.16 293.36 L559.78 293.42 L561.41 293.49 L563.04 293.55 L564.66 293.62 L566.29 293.69 L567.91 293.76 L569.54 293.84 L571.16 293.91 L572.79 293.99 L574.41 294.07 L576.03 294.15 L577.66 294.24 L579.28 294.32 L580.9 294.41 L582.52 294.5 L584.14 294.59 L585.76 294.69 L587.38 294.78 L589 294.88 L590.62 294.98 L592.24 295.08 L593.86 295.19 L595.48 295.29 L597.09 295.4 L598.71 295.51 L600.33 295.62 L601.94 295.74 L603.56 295.85 L605.18 295.97 L606.79 296.09 L608.41 296.21 L610.03 296.34 L611.64 296.46 L613.26 296.59 L614.87 296.72 L616.49 296.85 L618.1 296.98 L619.71 297.11 L621.33 297.25 L622.94 297.39 L624.56 297.53 L626.17 297.67 L627.78 297.81 L629.4 297.96 L631.01 298.1 L632.62 298.25 L634.23 298.4 L635.85 298.55 L637.46 298.71 L639.07 298.86 L640.68 299.02 L642.3 299.18 L643.91 299.34 L645.52 299.5 L647.13 299.66 L648.75 299.83 L650.36 299.99 L651.97 300.16 L653.58 300.33 L655.19 300.5 L656.81 300.67 L658.42 300.85 L660.03 301.02 L661.64 301.2 L663.25 301.38 L664.87 301.56"/>
<path class="gc" stroke="#6a6a6a" stroke-opacity=".75" d="M563.3 255.8 L565.23 254.66 L567.17 253.53 L569.12 252.4 L571.08 251.27 L573.05 250.15 L575.03 249.03 L577.02 247.91 L579.02 246.79 L581.02 245.68 L583.04 244.57 L585.07 243.47 L587.1 242.37 L589.14 241.27 L591.19 240.17 L593.25 239.08 L595.32 237.99 L597.39 236.91 L599.47 235.83 L601.56 234.75 L603.65 233.68 L605.75 232.62 L607.86 231.55 L609.98 230.49 L612.09 229.44 L614.22 228.39 L616.35 227.34 L618.48 226.3 L620.62 225.26 L622.77 224.23 L624.92 223.21 L627.07 222.19 L629.22 221.17 L631.38 220.16 L633.55 219.15 L635.71 218.15 L637.88 217.16 L640.05 216.17 L642.23 215.18 L644.4 214.21 L646.58 213.24 L648.76 212.27 L650.94 211.31 L653.12 210.36 L655.31 209.41 L657.49 208.47 L659.67 207.54 L661.85 206.61 L664.04 205.69 L666.22 204.78 L668.4 203.87 L670.58 202.97 L672.76 202.08 L674.94 201.19 L677.11 200.32 L679.29 199.45 L681.46 198.59 L683.63 197.74 L685.79 196.89 L687.96 196.05 L690.12 195.23 L692.27 194.41 L694.43 193.6 L696.57 192.79 L698.72 192 L700.86 191.22 L702.99 190.44 L705.12 189.67 L707.25 188.92 L709.37 188.17 L711.48 187.44 L713.59 186.71 L715.69 185.99 L717.79 185.29 L719.88 184.59 L721.96 183.9 L724.04 183.23 L726.11 182.57 L728.17 181.91 L730.22 181.27 L732.27 180.64 L734.31 180.02 L736.34 179.41 L738.36 178.82 L740.38 178.23 L742.38 177.66 L744.38 177.1 L746.37 176.55 L748.35 176.02 L750.32 175.49 L752.29 174.98 L754.24 174.49 L756.19 174 L758.12 173.53 L760.05 173.07 L761.96 172.63 L763.87 172.2 L765.77 171.78 L767.66 171.38 L769.54 170.99 L771.4 170.61 L773.26 170.25 L775.11 169.9 L776.95 169.57 L778.78 169.25 L780.6 168.95 L782.41 168.66 L784.21 168.38 L786 168.12 L787.79 167.88 L789.56 167.65 L791.32 167.44 L793.07 167.24 L794.82 167.05 L796.55 166.88 L798.28 166.73 L799.99 166.59 L801.7 166.47 L803.4 166.36 L805.09 166.27 L806.77 166.19 L808.44 166.13 L810.1 166.08 L811.76 166.05 L813.4 166.04 L815.04 166.04 L816.67 166.06 L818.29 166.09 L819.91 166.14 L821.52 166.2 L823.12 166.28 L824.71 166.38 L826.3 166.49 L827.88 166.61 L829.45 166.76 L831.02 166.91 L832.58 167.08 L834.14 167.27 L835.68 167.47 L837.23 167.69 L838.77 167.92 L840.3 168.17 L841.83 168.43 L843.35 168.71 L844.87 169 L846.38 169.31 L847.89 169.63 L849.39 169.97 L850.89 170.32 L852.39 170.68 L853.88 171.06 L855.37 171.45 L856.86 171.86 L858.34 172.28 L859.82 172.71 L861.3 173.16 L862.77 173.62 L864.24 174.09 L865.71 174.58 L867.18 175.08 L868.65 175.59 L870.11 176.11 L871.57 176.65 L873.03 177.2 L874.49 177.76 L875.95 178.34 L877.4 178.92 L878.85 179.52 L880.31 180.13 L881.76 180.75 L883.21 181.39 L884.66 182.03 L886.11 182.69 L887.56 183.35 L889.01 184.03 L890.45 184.72 L891.9 185.41 L893.35 186.12 L894.8 186.84 L896.24 187.57 L897.69 188.31 L899.13 189.06 L900.58 189.81 L902.03 190.58 L903.47 191.36 L904.92 192.14 L906.36 192.94 L907.81 193.74 L909.26 194.55 L910.7 195.38 L912.15 196.21 L913.6 197.04 L915.04 197.89 L916.49 198.74 L917.94 199.61 L919.38 200.48 L920.83 201.35 L922.28 202.24 L923.73 203.13 L925.18 204.03 L926.62 204.94 L928.07 205.86 L929.52 206.78 L930.97 207.7 L932.42 208.64 L933.86 209.58 L935.31 210.53 L936.76 211.48 L938.21 212.44 L939.65 213.41 L941.1 214.38 L942.55 215.36 L944 216.35 L945.44 217.34 L946.89 218.33 L948.33 219.33 L949.78 220.34 L951.22 221.35 L952.67 222.37 L954.11 223.39 L955.55 224.42 L956.99 225.45 L958.43 226.49 L959.87 227.53 L961.31 228.58 L962.75 229.63 L964.19 230.68 L965.62 231.74 L967.05 232.81 L968.49 233.88 L969.92 234.95 L971.35 236.03 L972.77 237.11"/>
<path class="gc" stroke="#6a6a6a" stroke-opacity=".75" d="M718.3 251.3 L717.78 250 L717.28 248.71 L716.78 247.42 L716.28 246.13 L715.8 244.85 L715.32 243.56 L714.85 242.28 L714.39 241 L713.94 239.73 L713.49 238.46 L713.05 237.18 L712.62 235.92 L712.2 234.65 L711.78 233.39 L711.37 232.13 L710.97 230.88 L710.57 229.62 L710.19 228.37 L709.8 227.13 L709.43 225.89 L709.06 224.65 L708.7 223.41 L708.34 222.18 L707.99 220.95 L707.65 219.73 L707.31 218.5 L706.98 217.29 L706.65 216.08 L706.33 214.87 L706.01 213.66 L705.7 212.46 L705.4 211.27 L705.1 210.08 L704.8 208.89 L704.51 207.71 L704.22 206.53 L703.94 205.36 L703.66 204.19 L703.39 203.03 L703.11 201.88 L702.85 200.73 L702.58 199.58 L702.32 198.44 L702.06 197.31 L701.8 196.18 L701.55 195.06 L701.29 193.94 L701.04 192.84 L700.79 191.73 L700.54 190.64 L700.29 189.55 L700.05 188.47 L699.8 187.39 L699.55 186.32 L699.3 185.26 L699.05 184.21 L698.81 183.16 L698.55 182.12 L698.3 181.1 L698.05 180.07 L697.79 179.06 L697.53 178.06 L697.27 177.06 L697 176.07 L696.73 175.1 L696.45 174.13 L696.17 173.17 L695.88 172.22 L695.59 171.28 L695.3 170.35 L694.99 169.43 L694.68 168.52 L694.36 167.62 L694.03 166.74 L693.69 165.86 L693.35 165 L692.99 164.14 L692.63 163.3 L692.25 162.47 L691.86 161.66 L691.46 160.85 L691.05 160.06 L690.62 159.28 L690.18 158.52 L689.73 157.77 L689.26 157.03 L688.77 156.3 L688.27 155.59 L687.75 154.9 L687.22 154.22 L686.66 153.55 L686.09 152.9 L685.49 152.26 L684.88 151.64 L684.24 151.04 L683.59 150.45 L682.91 149.88 L682.21 149.32 L681.48 148.79 L680.73 148.26 L679.95 147.76 L679.15 147.27 L678.32 146.8 L677.47 146.35 L676.58 145.92 L675.67 145.5 L674.73 145.11 L673.76 144.73 L672.75 144.37 L671.72 144.03 L670.65 143.71 L669.56 143.41 L668.42 143.13 L667.26 142.87 L666.06 142.63 L664.82 142.4 L663.55 142.2 L662.24 142.02 L660.9 141.86 L659.52 141.72 L658.1 141.6 L656.65 141.5 L655.15 141.42 L653.62 141.36 L652.05 141.32 L650.43 141.3 L648.78 141.3 L647.09 141.33 L645.36 141.37 L643.59 141.44 L641.78 141.52 L639.92 141.63 L638.03 141.75 L636.1 141.9 L634.12 142.07 L632.11 142.26 L630.05 142.46 L627.95 142.69 L625.82 142.94 L623.64 143.2 L621.42 143.49 L619.16 143.8 L616.86 144.12 L614.53 144.47 L612.15 144.83 L609.74 145.21 L607.28 145.62 L604.79 146.04 L602.26 146.47 L599.69 146.93 L597.09 147.4 L594.45 147.89 L591.77 148.4 L589.06 148.93 L586.32 149.47 L583.54 150.03 L580.73 150.61 L577.88 151.2 L575 151.81 L572.1 152.43 L569.16 153.07 L566.19 153.73 L563.19 154.4 L560.16 155.08 L557.1 155.78 L554.02 156.5 L550.91 157.23 L547.78 157.97 L544.62 158.72 L541.43 159.49 L538.22 160.28 L534.99 161.07 L531.74 161.88 L528.47 162.7 L525.18 163.53 L521.87 164.37"/>
<path class="gc" stroke="#6a6a6a" stroke-opacity=".75" d="M839.5 257 L838.11 256.27 L836.72 255.54 L835.34 254.81 L833.95 254.09 L832.56 253.37 L831.18 252.66 L829.79 251.95 L828.41 251.25 L827.02 250.55 L825.64 249.86 L824.25 249.17 L822.87 248.48 L821.49 247.8 L820.1 247.13 L818.72 246.46 L817.33 245.79 L815.95 245.13 L814.57 244.48 L813.18 243.83 L811.8 243.19 L810.42 242.55 L809.03 241.92 L807.65 241.29 L806.27 240.67 L804.88 240.05 L803.5 239.44 L802.11 238.84 L800.73 238.24 L799.34 237.65 L797.96 237.06 L796.57 236.48 L795.18 235.91 L793.79 235.34 L792.4 234.78 L791.01 234.22 L789.62 233.67 L788.23 233.13 L786.84 232.59 L785.44 232.06 L784.05 231.54 L782.65 231.03 L781.25 230.52 L779.85 230.01 L778.45 229.52 L777.05 229.03 L775.65 228.55 L774.24 228.08 L772.83 227.61 L771.42 227.15 L770.01 226.7 L768.6 226.25 L767.18 225.82 L765.76 225.39 L764.34 224.96 L762.92 224.55 L761.49 224.14 L760.06 223.74 L758.63 223.35 L757.2 222.97 L755.76 222.59 L754.32 222.22 L752.88 221.86 L751.43 221.51 L749.98 221.17 L748.53 220.83 L747.07 220.51 L745.61 220.19 L744.15 219.88 L742.68 219.58 L741.21 219.28 L739.74 219 L738.26 218.72 L736.77 218.45 L735.28 218.19 L733.79 217.94 L732.3 217.7 L730.79 217.47 L729.29 217.24 L727.78 217.03 L726.26 216.82 L724.74 216.62 L723.21 216.43 L721.68 216.25 L720.15 216.08 L718.6 215.92 L717.06 215.77 L715.51 215.62 L713.95 215.49 L712.38 215.36 L710.81 215.25 L709.24 215.14 L707.66 215.04 L706.07 214.95 L704.48 214.87 L702.88 214.8 L701.27 214.74 L699.66 214.68 L698.04 214.64 L696.42 214.61 L694.78 214.58 L693.15 214.57 L691.5 214.56 L689.85 214.56 L688.19 214.58 L686.53 214.6 L684.86 214.63 L683.18 214.67 L681.5 214.72 L679.8 214.78 L678.11 214.84 L676.4 214.92 L674.69 215.01 L672.97 215.1 L671.24 215.21 L669.51 215.32 L667.77 215.44 L666.02 215.57 L664.26 215.71 L662.5 215.86 L660.73 216.02 L658.96 216.19 L657.17 216.37 L655.38 216.55 L653.58 216.75 L651.78 216.95 L649.97 217.17 L648.15 217.39 L646.32 217.62 L644.49 217.86 L642.65 218.1 L640.81 218.36 L638.95 218.62 L637.09 218.9 L635.23 219.18 L633.35 219.47 L631.47 219.77 L629.59 220.08 L627.7 220.39 L625.8 220.72 L623.89 221.05 L621.98 221.39 L620.06 221.74 L618.14 222.09 L616.21 222.46 L614.27 222.83 L612.33 223.21 L610.38 223.6 L608.43 224 L606.47 224.4 L604.5 224.81 L602.53 225.23 L600.56 225.66 L598.58 226.09 L596.59 226.54 L594.6 226.99 L592.61 227.44 L590.61 227.91 L588.6 228.38 L586.59 228.86 L584.58 229.34 L582.56 229.84 L580.54 230.34 L578.52 230.84 L576.49 231.35 L574.45 231.88 L572.42 232.4 L570.38 232.94"/>
<path class="gc" stroke="#6a6a6a" stroke-opacity=".75" d="M575 318.8 L573.39 319.12 L571.77 319.44 L570.16 319.76 L568.55 320.08 L566.94 320.4 L565.33 320.72 L563.73 321.04 L562.12 321.36 L560.51 321.68 L558.91 322 L557.31 322.32 L555.7 322.63 L554.1 322.95 L552.5 323.27 L550.9 323.59 L549.3 323.91 L547.7 324.23 L546.11 324.54 L544.51 324.86 L542.92 325.18 L541.32 325.5 L539.73 325.81 L538.14 326.13 L536.55 326.44 L534.96 326.76 L533.37 327.07 L531.78 327.39 L530.2 327.7 L528.61 328.01 L527.03 328.33 L525.45 328.64 L523.86 328.95 L522.28 329.26 L520.7 329.57 L519.12 329.88 L517.54 330.19 L515.97 330.5 L514.39 330.8 L512.81 331.11 L511.24 331.41 L509.66 331.72 L508.09 332.02 L506.52 332.32 L504.95 332.63 L503.38 332.93 L501.81 333.23 L500.24 333.53 L498.67 333.83 L497.11 334.12 L495.54 334.42 L493.98 334.71 L492.41 335.01 L490.85 335.3 L489.29 335.59 L487.73 335.88 L486.16 336.17 L484.6 336.46 L483.05 336.75 L481.49 337.03 L479.93 337.32 L478.37 337.6 L476.82 337.88 L475.26 338.16 L473.7 338.44 L472.15 338.72 L470.6 339 L469.04 339.27 L467.49 339.55 L465.94 339.82 L464.39 340.09 L462.84 340.36 L461.29 340.63 L459.74 340.89 L458.19 341.16 L456.64 341.42 L455.09 341.68 L453.54 341.94 L451.99 342.2 L450.45 342.46 L448.9 342.71 L447.35 342.96 L445.81 343.21 L444.26 343.46 L442.72 343.71 L441.17 343.96 L439.62 344.2 L438.08 344.45 L436.54 344.69 L434.99 344.93 L433.45 345.16 L431.9 345.4 L430.36 345.63 L428.81 345.86 L427.27 346.09 L425.72 346.32 L424.18 346.54 L422.64 346.77 L421.09 346.99 L419.55 347.21 L418 347.43 L416.46 347.64 L414.91 347.85 L413.37 348.06 L411.82 348.27 L410.28 348.48 L408.73 348.69 L407.19 348.89 L405.64 349.09 L404.09 349.29 L402.55 349.48 L401 349.68 L399.45 349.87 L397.9 350.06 L396.35 350.24 L394.81 350.43 L393.26 350.61 L391.71 350.79 L390.15 350.97 L388.6 351.14 L387.05 351.31 L385.5 351.48 L383.94 351.65 L382.39 351.82 L380.83 351.98 L379.28 352.14 L377.72 352.3 L376.16 352.45 L374.61 352.61 L373.05 352.76 L371.49 352.91 L369.93 353.05 L368.36 353.2 L366.8 353.34 L365.24 353.47 L363.67 353.61 L362.11 353.74 L360.54 353.87 L358.97 354 L357.4 354.13 L355.83 354.25 L354.26 354.37 L352.69 354.49 L351.11 354.6 L349.54 354.71 L347.96 354.82 L346.38 354.93 L344.8 355.03 L343.22 355.13 L341.64 355.23 L340.05 355.33 L338.47 355.42 L336.88 355.51 L335.3 355.6 L333.71 355.68 L332.11 355.76 L330.52 355.84 L328.93 355.92"/>
<path class="gc" stroke="#6a6a6a" stroke-opacity=".75" d="M450.9 303.3 L451.16 301.62 L451.45 299.94 L451.78 298.26 L452.15 296.58 L452.56 294.9 L453 293.22 L453.47 291.54 L453.99 289.86 L454.53 288.18 L455.12 286.5 L455.74 284.82 L456.4 283.14 L457.09 281.46 L457.82 279.78 L458.59 278.1 L459.39 276.42 L460.23 274.74 L461.1 273.06 L462.01 271.38 L462.96 269.7 L463.94 268.02 L464.95 266.34 L466 264.66 L467.09 262.98 L468.21 261.3 L469.37 259.62 L470.56 257.94 L471.78 256.26 L473.05 254.58 L474.34 252.9"/>
<path class="gc" stroke="#6a6a6a" stroke-opacity=".75" d="M425.3 319.1 L423.71 319.61 L422.13 320.12 L420.55 320.63 L418.98 321.14 L417.41 321.64 L415.84 322.15 L414.27 322.66 L412.71 323.17 L411.16 323.68 L409.6 324.19 L408.05 324.69 L406.51 325.2 L404.96 325.71 L403.43 326.21 L401.89 326.72 L400.36 327.23 L398.83 327.73 L397.31 328.24 L395.79 328.74 L394.27 329.24 L392.75 329.75 L391.24 330.25 L389.74 330.75 L388.23 331.25 L386.74 331.75 L385.24 332.25 L383.75 332.75 L382.26 333.24 L380.77 333.74 L379.29 334.24 L377.81 334.73 L376.34 335.22 L374.87 335.72 L373.4 336.21 L371.94 336.7 L370.47 337.19 L369.02 337.67 L367.56 338.16 L366.11 338.65 L364.66 339.13 L363.22 339.61 L361.77 340.09 L360.34 340.57 L358.9 341.05 L357.47 341.53 L356.04 342 L354.61 342.48 L353.19 342.95 L351.77 343.42 L350.35 343.89 L348.93 344.35 L347.52 344.82 L346.11 345.28 L344.71 345.74 L343.3 346.2 L341.9 346.66 L340.5 347.12 L339.1 347.57 L337.71 348.02 L336.32 348.47 L334.93 348.92 L333.54 349.36 L332.16 349.81 L330.77 350.25 L329.39 350.69 L328.01 351.12"/>
<path class="gc" stroke="#6a6a6a" stroke-opacity=".75" d="M387.3 361.7 L385.43 360.4 L383.59 359.1 L381.77 357.8 L379.98 356.5 L378.21 355.19 L376.47 353.89 L374.75 352.58 L373.06 351.27 L371.39 349.97 L369.75 348.66 L368.13 347.35 L366.54 346.04 L364.98 344.72 L363.44 343.41 L361.93 342.1 L360.44 340.78 L358.98 339.47 L357.55 338.15 L356.15 336.84 L354.77 335.52 L353.42 334.2 L352.1 332.89 L350.8 331.57 L349.53 330.25 L348.29 328.93 L347.08 327.61 L345.89 326.3 L344.73 324.98 L343.6 323.66 L342.5 322.34 L341.42 321.02 L340.38 319.7 L339.36 318.38 L338.37 317.06 L337.41 315.74 L336.47 314.42 L335.56 313.1 L334.69 311.78 L333.84 310.47 L333.02 309.15 L332.22 307.83 L331.46 306.51 L330.72 305.2 L330.01 303.88 L329.33 302.56 L328.68 301.25 L328.06 299.93 L327.46 298.62 L326.9 297.31 L326.36 295.99 L325.85 294.68"/>
<path class="gc" stroke="#6a6a6a" stroke-opacity=".75" d="M842.5 203.8 L842.12 202.31 L841.73 200.83 L841.36 199.35 L840.98 197.87 L840.61 196.39 L840.24 194.91 L839.88 193.44 L839.51 191.97 L839.15 190.5 L838.8 189.04 L838.45 187.57 L838.1 186.11 L837.75 184.66 L837.41 183.2 L837.07 181.75 L836.73 180.31 L836.39 178.86 L836.06 177.42 L835.73 175.98 L835.41 174.55 L835.08 173.12 L834.76 171.69 L834.44 170.27 L834.12 168.85 L833.81 167.44 L833.5 166.03 L833.19 164.62 L832.88 163.22 L832.58 161.82 L832.27 160.43 L831.97 159.04 L831.67 157.66 L831.37 156.29 L831.07 154.92 L830.77 153.55 L830.48 152.19 L830.18 150.84 L829.89 149.49 L829.59 148.15 L829.3 146.82 L829.01 145.49 L828.71 144.17 L828.42 142.86 L828.12 141.56 L827.83 140.26 L827.53 138.98 L827.23 137.7 L826.93 136.43 L826.63 135.17 L826.33 133.91 L826.02 132.67 L825.71 131.44 L825.39 130.22 L825.07 129.01 L824.75 127.81 L824.42 126.63 L824.09 125.45 L823.75 124.29 L823.4 123.14 L823.05 122.01 L822.69 120.89 L822.32 119.78 L821.94 118.69 L821.55 117.62 L821.15 116.56 L820.74 115.52 L820.31 114.49 L819.88 113.49 L819.43 112.5 L818.96 111.53 L818.48 110.58 L817.98 109.66 L817.46 108.75 L816.92 107.87 L816.36 107.01 L815.78 106.17 L815.18 105.36 L814.55 104.57 L813.89 103.81 L813.21 103.08 L812.5 102.37 L811.76 101.69 L810.98 101.04 L810.17 100.43 L809.33 99.84 L808.45 99.28 L807.53 98.76 L806.57 98.26 L805.56 97.81 L804.52 97.38 L803.43 96.99 L802.29 96.64 L801.1 96.32 L799.86 96.04"/>
<path class="gc" stroke="#6a6a6a" stroke-opacity=".75" d="M1420.5 286.7 L1419.57 287.6 L1418.62 288.51 L1417.67 289.41 L1416.7 290.32 L1415.73 291.23 L1414.74 292.14 L1413.74 293.05 L1412.72 293.96 L1411.7 294.88 L1410.66 295.79 L1409.62 296.71 L1408.56 297.63 L1407.49 298.55 L1406.4 299.47 L1405.31 300.4 L1404.2 301.32 L1403.08 302.24 L1401.95 303.17 L1400.81 304.1 L1399.65 305.02 L1398.49 305.95 L1397.31 306.88 L1396.11 307.81 L1394.91 308.74 L1393.69 309.67 L1392.47 310.6 L1391.23 311.53 L1389.97 312.47 L1388.71 313.4 L1387.43 314.33 L1386.14 315.27 L1384.84 316.2 L1383.53 317.13 L1382.21 318.07 L1380.87 319 L1379.52 319.94 L1378.16 320.87 L1376.79 321.81 L1375.4 322.74 L1374.01 323.67 L1372.6 324.61 L1371.18 325.54 L1369.75 326.48 L1368.3 327.41 L1366.85 328.34 L1365.38 329.27 L1363.9 330.21 L1362.41 331.14 L1360.91 332.07 L1359.4 333 L1357.88 333.93 L1356.34 334.86 L1354.8 335.78 L1353.24 336.71 L1351.67 337.64 L1350.1 338.56 L1348.51 339.49 L1346.91 340.41 L1345.3 341.33 L1343.68 342.25 L1342.05 343.17 L1340.4 344.09 L1338.75 345.01 L1337.09 345.93 L1335.42 346.84 L1333.74 347.75 L1332.05 348.66 L1330.34 349.57 L1328.63 350.48 L1326.91 351.39 L1325.18 352.3 L1323.44 353.2 L1321.7 354.1 L1319.94 355 L1318.17 355.9 L1316.4 356.79 L1314.62 357.69 L1312.83 358.58 L1311.03 359.47 L1309.22 360.36 L1307.4 361.24 L1305.58 362.12 L1303.74 363 L1301.9 363.88 L1300.06 364.76 L1298.2 365.63 L1296.34 366.5 L1294.47 367.37 L1292.6 368.23 L1290.71 369.1 L1288.82 369.96 L1286.93 370.81 L1285.02 371.67 L1283.12 372.52 L1281.2 373.36 L1279.28 374.21 L1277.35 375.05 L1275.42 375.89 L1273.48 376.72 L1271.54 377.55 L1269.59 378.38 L1267.64 379.2 L1265.68 380.02 L1263.72 380.84 L1261.75 381.65 L1259.78 382.46 L1257.81 383.27 L1255.83 384.07 L1253.84 384.87 L1251.86 385.66 L1249.87 386.45 L1247.87 387.24 L1245.88 388.02 L1243.88 388.8"/>
<path class="gc" stroke="#6a6a6a" stroke-opacity=".75" d="M1405.3 256.4 L1404.27 254.82 L1403.21 253.24 L1402.12 251.67 L1400.99 250.09 L1399.82 248.52 L1398.62 246.94 L1397.39 245.37 L1396.12 243.79 L1394.81 242.22 L1393.47 240.65 L1392.1 239.07 L1390.7 237.5 L1389.26 235.93 L1387.78 234.36 L1386.28 232.79 L1384.74 231.23 L1383.16 229.66 L1381.56 228.09 L1379.92 226.53 L1378.25 224.96 L1376.55 223.4 L1374.81 221.83 L1373.04 220.27 L1371.25 218.71 L1369.42 217.15 L1367.56 215.59 L1365.67 214.03 L1363.75 212.48 L1361.79 210.92 L1359.81 209.37 L1357.8 207.81 L1355.76 206.26 L1353.69 204.71 L1351.59 203.16 L1349.47 201.61 L1347.31 200.06 L1345.13 198.52 L1342.92 196.97 L1340.68 195.43 L1338.41 193.89 L1336.12 192.35 L1333.8 190.81 L1331.46 189.28 L1329.09 187.74 L1326.69 186.21 L1324.27 184.68 L1321.83 183.15 L1319.36 181.63 L1316.87 180.1 L1314.35 178.58 L1311.82 177.06 L1309.26 175.54 L1306.67 174.03 L1304.07 172.51 L1301.45 171 L1298.8 169.5 L1296.14 167.99 L1293.45 166.49 L1290.75 164.99"/>
<path class="gc" stroke="#6a6a6a" stroke-opacity=".75" d="M1466.7 279.5 L1464.77 278.26 L1462.81 277.01 L1460.82 275.77 L1458.82 274.53 L1456.79 273.29 L1454.74 272.05 L1452.66 270.82 L1450.56 269.59 L1448.44 268.35 L1446.3 267.12 L1444.14 265.9 L1441.95 264.67 L1439.74 263.45 L1437.52 262.22 L1435.27 261.01 L1433 259.79 L1430.7 258.57 L1428.39 257.36 L1426.06 256.15 L1423.71 254.94 L1421.34 253.74 L1418.96 252.53 L1416.55 251.33 L1414.12 250.13 L1411.68 248.94 L1409.22 247.75 L1406.74 246.56 L1404.25 245.37 L1401.73 244.19 L1399.2 243.01 L1396.66 241.83 L1394.1 240.66 L1391.52 239.49 L1388.93 238.32 L1386.32 237.15 L1383.7 235.99 L1381.07 234.84 L1378.42 233.68 L1375.76 232.54 L1373.09 231.39 L1370.4 230.25 L1367.7 229.11 L1364.99 227.98 L1362.27 226.85 L1359.53 225.72 L1356.79 224.6 L1354.04 223.49 L1351.27 222.38 L1348.5 221.27 L1345.72 220.17 L1342.93 219.07 L1340.13 217.98 L1337.32 216.89 L1334.51 215.81 L1331.69 214.73 L1328.86 213.66 L1326.03 212.59 L1323.19 211.53 L1320.35 210.48 L1317.5 209.43 L1314.65 208.39 L1311.79 207.35 L1308.93 206.32 L1306.07 205.3 L1303.21 204.28 L1300.34 203.27 L1297.47 202.26 L1294.6 201.26 L1291.74 200.27 L1288.87 199.29 L1286 198.31 L1283.13 197.34 L1280.27 196.38 L1277.4 195.42 L1274.54 194.48 L1271.69 193.54 L1268.83 192.61 L1265.98 191.68 L1263.14 190.77 L1260.3 189.86 L1257.46 188.97 L1254.63 188.08 L1251.81 187.2 L1249 186.33 L1246.19 185.46 L1243.39 184.61 L1240.6 183.77 L1237.81 182.94 L1235.04 182.12 L1232.28 181.3 L1229.53 180.5 L1226.79 179.71 L1224.06 178.93 L1221.34 178.16 L1218.64 177.4 L1215.94 176.65 L1213.26 175.91 L1210.6 175.19 L1207.95 174.47 L1205.31 173.77 L1202.69 173.08 L1200.09 172.4 L1197.5 171.74 L1194.93 171.08 L1192.38 170.44 L1189.84 169.81 L1187.32 169.2 L1184.82 168.6 L1182.33 168.01 L1179.87 167.44 L1177.43 166.88 L1175 166.33 L1172.6 165.8 L1170.21 165.28 L1167.85 164.78 L1165.51 164.29 L1163.19 163.81 L1160.89 163.36 L1158.61 162.91 L1156.35 162.48 L1154.12 162.07 L1151.91 161.67 L1149.72 161.29 L1147.56 160.92 L1145.42 160.57 L1143.3 160.24 L1141.21 159.92 L1139.13 159.62 L1137.09 159.34 L1135.06 159.07 L1133.06 158.82 L1131.09 158.58 L1129.14 158.36 L1127.21 158.16 L1125.31 157.98 L1123.43 157.81 L1121.57 157.66 L1119.74 157.53"/>
<path class="gc" stroke="#6a6a6a" stroke-opacity=".75" d="M1478 352.5 L1477.1 354.16 L1476.15 355.81 L1475.16 357.47 L1474.12 359.13 L1473.04 360.78 L1471.91 362.44 L1470.74 364.1 L1469.53 365.75 L1468.26 367.41 L1466.96 369.07 L1465.61 370.72 L1464.21 372.38 L1462.77 374.04 L1461.29 375.69 L1459.76 377.35 L1458.19 379.01 L1456.58 380.66 L1454.92 382.32 L1453.22 383.98 L1451.47 385.63 L1449.68 387.29 L1447.85 388.95 L1445.98 390.6 L1444.06 392.26 L1442.1 393.92 L1440.1 395.57 L1438.05 397.23 L1435.97 398.89 L1433.84 400.54 L1431.67 402.2 L1429.45 403.86 L1427.2 405.51 L1424.91 407.17 L1422.57 408.83 L1420.19 410.48 L1417.77 412.14 L1415.31 413.79 L1412.81 415.45 L1410.28 417.11 L1407.7 418.76 L1405.08 420.42 L1402.42 422.08 L1399.72 423.73 L1396.98 425.39 L1394.21 427.05 L1391.39 428.7 L1388.54 430.36 L1385.64 432.02 L1382.71 433.67 L1379.75 435.33 L1376.74 436.99 L1373.7 438.64 L1370.62 440.3 L1367.5 441.96 L1364.35 443.61"/>
<path class="gc" stroke="#6a6a6a" stroke-opacity=".75" d="M500 245.8 L500.53 246.72 L501.06 247.65 L501.61 248.58 L502.15 249.52 L502.71 250.46 L503.27 251.4 L503.84 252.35 L504.42 253.3 L505 254.25 L505.59 255.21 L506.19 256.17 L506.8 257.13 L507.41 258.1 L508.04 259.07 L508.67 260.04 L509.31 261.02 L509.96 262 L510.62 262.99 L511.28 263.97 L511.96 264.96 L512.64 265.95 L513.34 266.95 L514.04 267.95 L514.76 268.95 L515.48 269.95 L516.21 270.95 L516.95 271.96 L517.71 272.97 L518.47 273.98 L519.24 275 L520.02 276.02 L520.82 277.03 L521.62 278.06 L522.43 279.08 L523.26 280.1 L524.09 281.13 L524.94 282.16 L525.8 283.19 L526.66 284.22 L527.54 285.26 L528.43 286.29 L529.33 287.33 L530.24 288.37 L531.16 289.41 L532.09 290.45 L533.04 291.5 L533.99 292.54 L534.96 293.59 L535.94 294.63 L536.92 295.68 L537.92 296.73 L538.94 297.78 L539.96 298.83 L540.99 299.89 L542.04 300.94 L543.09 301.99 L544.16 303.05 L545.24 304.11 L546.33 305.16 L547.43 306.22 L548.54 307.28 L549.67 308.34 L550.8 309.4 L551.95 310.46 L553.11 311.52 L554.27 312.58 L555.45 313.64 L556.65 314.7 L557.85 315.76 L559.06 316.82 L560.29 317.89 L561.52 318.95 L562.77 320.01 L564.03 321.07 L565.3 322.13 L566.58 323.2 L567.87 324.26 L569.17 325.32 L570.48 326.38 L571.8 327.44 L573.13 328.5 L574.48 329.56 L575.83 330.62 L577.2 331.68 L578.57 332.74 L579.96 333.8 L581.35 334.86 L582.76 335.92 L584.18 336.97 L585.6 338.03 L587.04 339.09 L588.49 340.14 L589.94 341.19 L591.41 342.24 L592.88 343.3 L594.37 344.35 L595.86 345.4 L597.37 346.44 L598.88 347.49 L600.4 348.54 L601.93 349.58 L603.47 350.62 L605.02 351.66 L606.58 352.7 L608.15 353.74 L609.72 354.78 L611.31 355.81 L612.9 356.85 L614.5 357.88 L616.11 358.91 L617.73 359.94 L619.35 360.96 L620.99 361.99 L622.63 363.01 L624.27 364.03 L625.93 365.05 L627.59 366.06 L629.26 367.08 L630.94 368.09 L632.63 369.1 L634.32 370.1 L636.02 371.11 L637.72 372.11 L639.43 373.11 L641.15 374.1 L642.88 375.1 L644.61 376.09 L646.34 377.08 L648.09 378.06 L649.83 379.04 L651.59 380.02 L653.35 381 L655.11 381.97 L656.88 382.94 L658.66 383.91 L660.44 384.87 L662.22 385.83 L664.01 386.79 L665.81 387.74 L667.6 388.69 L669.41 389.63 L671.21 390.57 L673.02 391.51 L674.84 392.44 L676.66 393.37 L678.48 394.3 L680.3 395.22 L682.13 396.14 L683.96 397.05 L685.8 397.96 L687.63 398.86 L689.47 399.76 L691.32 400.65 L693.16 401.54 L695.01 402.43 L696.86 403.31"/>
<path class="gc" stroke="#6a6a6a" stroke-opacity=".75" d="M693 267.7 L691.31 267.87 L689.61 268.05 L687.92 268.23 L686.22 268.41 L684.52 268.6 L682.82 268.79 L681.12 268.99 L679.42 269.19 L677.72 269.4 L676.01 269.6 L674.31 269.82 L672.6 270.03 L670.89 270.25 L669.19 270.48 L667.48 270.71 L665.77 270.94 L664.06 271.18 L662.34 271.42 L660.63 271.66 L658.92 271.91 L657.2 272.16 L655.49 272.41 L653.77 272.67 L652.06 272.93 L650.34 273.2 L648.62 273.47 L646.9 273.74 L645.18 274.02 L643.46 274.3 L641.74 274.59 L640.02 274.87 L638.29 275.16 L636.57 275.46 L634.85 275.76 L633.12 276.06 L631.4 276.36 L629.67 276.67 L627.95 276.98 L626.22 277.3 L624.5 277.61 L622.77 277.94 L621.05 278.26 L619.32 278.59 L617.59 278.92 L615.86 279.25 L614.14 279.59 L612.41 279.93 L610.68 280.27 L608.95 280.62 L607.23 280.97 L605.5 281.32 L603.77 281.68 L602.04 282.04 L600.32 282.4 L598.59 282.76 L596.86 283.13 L595.14 283.5 L593.41 283.87 L591.69 284.24 L589.96 284.62 L588.23 285 L586.51 285.38 L584.79 285.77 L583.06 286.16 L581.34 286.55 L579.62 286.94 L577.9 287.34 L576.18 287.74 L574.46 288.14 L572.74 288.54 L571.02 288.94 L569.3 289.35 L567.58 289.76 L565.87 290.17 L564.15 290.59 L562.44 291 L560.73 291.42 L559.01 291.84 L557.3 292.27 L555.59 292.69 L553.89 293.12 L552.18 293.55 L550.47 293.98 L548.77 294.41 L547.07 294.84 L545.37 295.28 L543.67 295.72 L541.97 296.16 L540.27 296.6 L538.58 297.04 L536.88 297.49 L535.19 297.94 L533.5 298.38 L531.81 298.83 L530.13 299.29 L528.44 299.74 L526.76 300.19 L525.08 300.65 L523.4 301.11 L521.73 301.57 L520.05 302.03 L518.38 302.49 L516.71 302.95 L515.04 303.41 L513.37 303.88 L511.71 304.35 L510.05 304.81 L508.39 305.28 L506.73 305.75 L505.08 306.22 L503.42 306.69 L501.77 307.17 L500.13 307.64 L498.48 308.12 L496.84 308.59 L495.2 309.07 L493.56 309.54 L491.92 310.02 L490.29 310.5 L488.66 310.98 L487.03 311.46 L485.41 311.94 L483.79 312.42 L482.17 312.9 L480.55 313.39 L478.94 313.87 L477.33 314.35 L475.72 314.84 L474.12 315.32 L472.51 315.8 L470.91 316.29 L469.32 316.77 L467.72 317.26 L466.13 317.74 L464.55 318.23 L462.96 318.72 L461.38 319.2 L459.8 319.69 L458.22 320.17 L456.65 320.66 L455.08 321.15"/>
<path d="M475.66 219.89 L474.45 220.72 L473.21 221.56 L471.97 222.39 L470.7 223.22 L469.43 224.03 L468.15 224.85 L466.85 225.65 L465.55 226.45 L464.25 227.23 L462.93 228.01 L461.61 228.77 L460.29 229.52 L458.97 230.26 L457.64 230.98 L456.31 231.69 L454.99 232.39 L453.67 233.06 L452.35 233.73 L451.03 234.37 L449.72 234.99 L448.42 235.6 L447.12 236.18 L445.83 236.75 L444.55 237.29 L443.29 237.82 L442.03 238.32 L440.78 238.8 L439.55 239.25 L438.33 239.69 L437.13 240.1 L435.94 240.48 L434.78 240.84 L433.62 241.17 L432.49 241.48 L431.38 241.76 L430.29 242.02 L429.22 242.25 L428.17 242.46 L427.15 242.63 L426.15 242.78 L425.18 242.91 L424.24 243 L423.32 243.07 L422.44 243.11 L421.58 243.13 L420.75 243.11 L419.96 243.07 L419.2 243 L418.47 242.91 L417.78 242.78 L417.12 242.63 L416.5 242.46 L415.92 242.25 L415.38 242.02 L414.88 241.76 L414.42 241.48 L414 241.17 L413.62 240.84 L413.29 240.48 L413 240.1 L412.75 239.69 L412.55 239.25 L412.4 238.8 L412.3 238.32 L412.24 237.82 L412.23 237.29 L412.28 236.75 L412.37 236.18 L412.51 235.6 L412.7 234.99 L412.95 234.37 L413.24 233.73 L413.59 233.06 L413.99 232.39 L414.44 231.69 L414.94 230.98 L415.49 230.26 L416.1 229.52 L416.76 228.77 L417.47 228.01 L418.23 227.23 L419.04 226.45 L419.9 225.65 L420.81 224.85 L421.76 224.03 L422.77 223.22 L423.82 222.39 L424.92 221.56 L426.06 220.72 L427.25 219.89 L428.48 219.05 L429.75 218.21 L431.06 217.36 L432.4 216.52 L433.78 215.68 L435.2 214.85 L436.64 214.01 L438.12 213.19 L439.63 212.37 L441.16 211.55 L442.71 210.74 L444.29 209.95 L445.89 209.16 L447.5 208.38 L449.13 207.62 L450.77 206.87 L452.41 206.13 L454.07 205.41 L455.73 204.7 L457.39 204.01 L459.04 203.34 L460.7 202.69 L462.34 202.06 L463.98 201.45 L465.6 200.86 L467.21 200.29 L468.8 199.75 L470.37 199.23 L471.92 198.74 L473.44 198.27 L474.93 197.83 L476.39 197.42 L477.82 197.03 L479.21 196.68 L480.57 196.35 L481.88 196.05 L483.15 195.78 L484.38 195.55 L485.56 195.34 L486.69 195.16 L487.78 195.02 L488.81 194.91 L489.79 194.83 L490.71 194.78 L491.58 194.76 L492.39 194.78 L493.15 194.83 L493.85 194.91 L494.49 195.02 L495.07 195.16 L495.59 195.34 L496.05 195.55 L496.45 195.78 L496.79 196.05 L497.07 196.35 L497.29 196.68 L497.45 197.03 L497.55 197.42 L497.6 197.83 L497.58 198.27 L497.51 198.74 L497.38 199.23 L497.19 199.75 L496.95 200.29 L496.66 200.86 L496.31 201.45 L495.92 202.06 L495.47 202.69 L494.97 203.34 L494.42 204.01 L493.83 204.7 L493.19 205.41 L492.51 206.13 L491.79 206.87 L491.02 207.62 L490.22 208.38 L489.38 209.16 L488.5 209.95 L487.59 210.74 L486.64 211.55 L485.66 212.37 L484.65 213.19 L483.61 214.01 L482.55 214.85 L481.46 215.68 L480.34 216.52 L479.2 217.36 L478.04 218.21 L476.86 219.05 L475.66 219.89Z" fill="none" stroke="#4ec36b" stroke-width="2.083"/>
<path d="M484.7 318.97 L484.67 319.82 L484.63 320.66 L484.56 321.5 L484.48 322.33 L484.37 323.16 L484.24 323.99 L484.09 324.81 L483.92 325.62 L483.74 326.43 L483.53 327.22 L483.29 328.01 L483.04 328.79 L482.77 329.55 L482.48 330.3 L482.16 331.04 L481.83 331.76 L481.47 332.47 L481.1 333.16 L480.7 333.83 L480.28 334.49 L479.84 335.13 L479.39 335.74 L478.91 336.34 L478.41 336.92 L477.89 337.47 L477.35 338 L476.79 338.51 L476.21 339 L475.62 339.46 L475 339.89 L474.37 340.3 L473.71 340.69 L473.04 341.05 L472.35 341.38 L471.65 341.68 L470.93 341.96 L470.19 342.2 L469.44 342.42 L468.67 342.61 L467.89 342.78 L467.09 342.91 L466.29 343.01 L465.47 343.09 L464.64 343.13 L463.81 343.15 L462.96 343.13 L462.11 343.09 L461.25 343.01 L460.38 342.91 L459.51 342.78 L458.64 342.61 L457.77 342.42 L456.89 342.2 L456.02 341.96 L455.15 341.68 L454.28 341.38 L453.42 341.05 L452.56 340.69 L451.71 340.3 L450.87 339.89 L450.04 339.46 L449.22 339 L448.42 338.51 L447.63 338 L446.85 337.47 L446.1 336.92 L445.36 336.34 L444.64 335.74 L443.95 335.13 L443.28 334.49 L442.63 333.83 L442.01 333.16 L441.41 332.47 L440.85 331.76 L440.31 331.04 L439.8 330.3 L439.32 329.55 L438.88 328.79 L438.47 328.01 L438.09 327.22 L437.75 326.43 L437.44 325.62 L437.17 324.81 L436.94 323.99 L436.74 323.16 L436.59 322.33 L436.47 321.5 L436.38 320.66 L436.34 319.82 L436.33 318.97 L436.37 318.13 L436.44 317.29 L436.55 316.45 L436.7 315.62 L436.89 314.79 L437.11 313.96 L437.37 313.14 L437.67 312.33 L438 311.52 L438.37 310.72 L438.77 309.94 L439.21 309.16 L439.68 308.4 L440.18 307.64 L440.71 306.91 L441.28 306.18 L441.87 305.48 L442.48 304.78 L443.13 304.11 L443.8 303.45 L444.49 302.81 L445.21 302.2 L445.94 301.6 L446.7 301.02 L447.48 300.47 L448.27 299.93 L449.07 299.42 L449.9 298.94 L450.73 298.48 L451.57 298.04 L452.43 297.63 L453.29 297.24 L454.16 296.88 L455.03 296.55 L455.91 296.25 L456.79 295.97 L457.68 295.72 L458.56 295.5 L459.44 295.31 L460.32 295.15 L461.19 295.02 L462.06 294.92 L462.92 294.84 L463.78 294.8 L464.62 294.78 L465.46 294.8 L466.29 294.84 L467.1 294.92 L467.9 295.02 L468.69 295.15 L469.47 295.31 L470.23 295.5 L470.97 295.72 L471.7 295.97 L472.41 296.25 L473.11 296.55 L473.79 296.88 L474.44 297.24 L475.08 297.63 L475.71 298.04 L476.31 298.48 L476.89 298.94 L477.45 299.42 L477.99 299.93 L478.51 300.47 L479.01 301.02 L479.49 301.6 L479.95 302.2 L480.39 302.81 L480.8 303.45 L481.2 304.11 L481.57 304.78 L481.93 305.48 L482.26 306.18 L482.57 306.91 L482.86 307.64 L483.13 308.4 L483.37 309.16 L483.6 309.94 L483.8 310.72 L483.99 311.52 L484.15 312.33 L484.29 313.14 L484.41 313.96 L484.51 314.79 L484.59 315.62 L484.65 316.45 L484.69 317.29 L484.7 318.13 L484.7 318.97Z" fill="none" stroke="#25858e" stroke-width="2.083"/>
<path d="M1454.63 357.27 L1454.14 358.11 L1453.6 358.95 L1453.02 359.79 L1452.41 360.63 L1451.75 361.46 L1451.06 362.29 L1450.33 363.12 L1449.57 363.94 L1448.78 364.75 L1447.95 365.55 L1447.09 366.34 L1446.2 367.13 L1445.29 367.9 L1444.34 368.66 L1443.38 369.41 L1442.39 370.14 L1441.38 370.86 L1440.35 371.56 L1439.3 372.24 L1438.23 372.91 L1437.15 373.56 L1436.06 374.19 L1434.96 374.8 L1433.85 375.39 L1432.74 375.95 L1431.62 376.49 L1430.5 377.01 L1429.38 377.51 L1428.26 377.98 L1427.14 378.43 L1426.03 378.85 L1424.93 379.24 L1423.83 379.61 L1422.75 379.95 L1421.68 380.26 L1420.63 380.54 L1419.59 380.8 L1418.57 381.02 L1417.57 381.22 L1416.58 381.39 L1415.63 381.52 L1414.69 381.63 L1413.78 381.7 L1412.9 381.75 L1412.04 381.76 L1411.22 381.75 L1410.42 381.7 L1409.65 381.63 L1408.91 381.52 L1408.21 381.39 L1407.54 381.22 L1406.9 381.02 L1406.29 380.8 L1405.72 380.54 L1405.18 380.26 L1404.68 379.95 L1404.21 379.61 L1403.77 379.24 L1403.37 378.85 L1403.01 378.43 L1402.68 377.98 L1402.38 377.51 L1402.12 377.01 L1401.89 376.49 L1401.7 375.95 L1401.54 375.39 L1401.41 374.8 L1401.32 374.19 L1401.25 373.56 L1401.22 372.91 L1401.22 372.24 L1401.25 371.56 L1401.31 370.86 L1401.4 370.14 L1401.52 369.41 L1401.66 368.66 L1401.83 367.9 L1402.03 367.13 L1402.26 366.34 L1402.51 365.55 L1402.79 364.75 L1403.08 363.94 L1403.41 363.12 L1403.75 362.29 L1404.12 361.46 L1404.51 360.63 L1404.92 359.79 L1405.35 358.95 L1405.8 358.11 L1406.27 357.27 L1406.75 356.43 L1407.26 355.59 L1407.78 354.75 L1408.32 353.92 L1408.87 353.09 L1409.45 352.27 L1410.03 351.45 L1410.63 350.64 L1411.25 349.85 L1411.88 349.06 L1412.53 348.28 L1413.18 347.51 L1413.85 346.75 L1414.54 346.01 L1415.23 345.28 L1415.94 344.57 L1416.66 343.87 L1417.39 343.19 L1418.13 342.53 L1418.88 341.88 L1419.64 341.25 L1420.41 340.65 L1421.19 340.06 L1421.97 339.5 L1422.77 338.95 L1423.58 338.43 L1424.39 337.93 L1425.21 337.46 L1426.03 337 L1426.86 336.58 L1427.7 336.18 L1428.54 335.8 L1429.39 335.45 L1430.24 335.13 L1431.09 334.83 L1431.95 334.56 L1432.81 334.32 L1433.67 334.11 L1434.53 333.92 L1435.39 333.76 L1436.25 333.63 L1437.1 333.53 L1437.96 333.46 L1438.81 333.42 L1439.65 333.4 L1440.49 333.42 L1441.32 333.46 L1442.14 333.53 L1442.96 333.63 L1443.76 333.76 L1444.56 333.92 L1445.34 334.11 L1446.11 334.32 L1446.86 334.56 L1447.6 334.83 L1448.31 335.13 L1449.02 335.45 L1449.7 335.8 L1450.36 336.18 L1451 336.58 L1451.61 337 L1452.2 337.46 L1452.76 337.93 L1453.3 338.43 L1453.81 338.95 L1454.29 339.5 L1454.73 340.06 L1455.15 340.65 L1455.53 341.25 L1455.88 341.88 L1456.2 342.53 L1456.48 343.19 L1456.72 343.87 L1456.92 344.57 L1457.09 345.28 L1457.21 346.01 L1457.3 346.75 L1457.35 347.51 L1457.35 348.28 L1457.32 349.06 L1457.24 349.85 L1457.12 350.64 L1456.96 351.45 L1456.75 352.27 L1456.5 353.09 L1456.21 353.92 L1455.88 354.75 L1455.51 355.59 L1455.09 356.43 L1454.63 357.27Z" fill="none" stroke="#2ab07f" stroke-width="2.083"/>
<path class="gc" stroke="#4ec36b" d="M460.4 215.6 L461.06 216.2 L461.72 216.8 L462.37 217.41 L463.02 218.03 L463.66 218.65 L464.29 219.29 L464.91 219.93 L465.54 220.58 L466.15 221.23 L466.77 221.9 L467.37 222.57 L467.98 223.25 L468.58 223.93 L469.18 224.62 L469.77 225.32 L470.36 226.03 L470.95 226.74 L471.54 227.45 L472.13 228.18 L472.71 228.91 L473.3 229.65 L473.88 230.39 L474.46 231.14 L475.05 231.9 L475.63 232.66 L476.21 233.43 L476.8 234.2 L477.38 234.98 L477.97 235.76 L478.55 236.55 L479.14 237.35 L479.73 238.15 L480.33 238.95 L480.92 239.77 L481.52 240.58 L482.12 241.4 L482.73 242.23 L483.33 243.06 L483.94 243.9 L484.56 244.74 L485.18 245.58 L485.8 246.43 L486.43 247.29 L487.06 248.15 L487.7 249.01 L488.34 249.88 L488.99 250.75 L489.64 251.63 L490.3 252.51 L490.97 253.39 L491.64 254.28 L492.32 255.17 L493 256.06 L493.69 256.96 L494.39 257.87 L495.09 258.77 L495.8 259.68 L496.52 260.6 L497.24 261.51 L497.97 262.43 L498.71 263.36 L499.46 264.28 L500.22 265.21 L500.98 266.15 L501.75 267.08 L502.53 268.02 L503.32 268.96 L504.12 269.91 L504.92 270.85 L505.74 271.8 L506.56 272.76 L507.39 273.71 L508.23 274.67 L509.08 275.63 L509.94 276.59 L510.81 277.55 L511.69 278.52 L512.58 279.49 L513.47 280.46 L514.38 281.43 L515.3 282.41 L516.22 283.39 L517.16 284.37 L518.1 285.35 L519.06 286.33 L520.02 287.31 L521 288.3"/>
<path class="met" stroke="#4ec36b" d="M521 288.3 L521.53 288.87 L522.06 289.44 L522.6 290.01 L523.13 290.58 L523.68 291.16 L524.22 291.73 L524.77 292.3 L525.32 292.88 L525.88 293.45 L526.44 294.03 L527 294.6"/>
<path class="gc" stroke="#4ec36b" d="M452.5 220 L449.59 221.47 L446.71 222.95 L443.85 224.43 L441.02 225.91 L438.21 227.39 L435.43 228.87 L432.68 230.36 L429.95 231.84 L427.26 233.33 L424.59 234.82 L421.95 236.31 L419.34 237.81 L416.76 239.3 L414.2 240.8 L411.68 242.3 L409.19 243.8 L406.72 245.3 L404.29 246.8 L401.89 248.3 L399.52 249.8 L397.18 251.31 L394.87 252.82 L392.6 254.32 L390.35 255.83 L388.14 257.34 L385.96 258.85 L383.82 260.37 L381.71 261.88 L379.63 263.39 L377.58 264.91 L375.57 266.42 L373.59 267.94 L371.65 269.46 L369.74 270.97 L367.87 272.49 L366.03 274.01 L364.22 275.53 L362.45 277.05 L360.72 278.57 L359.02 280.1 L357.36 281.62 L355.73 283.14 L354.14 284.67 L352.58 286.19 L351.06 287.71 L349.58 289.24 L348.14 290.77 L346.73 292.29 L345.36 293.82 L344.02 295.34 L342.73 296.87 L341.47 298.4 L340.24 299.93 L339.06 301.46 L337.91 302.98 L336.8 304.51 L335.73 306.04 L334.7 307.57 L333.7 309.1"/>
<path class="met" stroke="#4ec36b" d="M333.7 309.1 L333 310.15 L332.32 311.19 L331.66 312.24 L331.01 313.28 L330.39 314.33 L329.78 315.37 L329.19 316.42 L328.61 317.46 L328.06 318.51 L327.52 319.55 L327 320.6"/>
<path class="gc" stroke="#4ec36b" d="M453.5 219.3 L451.04 219.95 L448.57 220.61 L446.09 221.28 L443.61 221.95 L441.13 222.63 L438.65 223.32 L436.16 224.01 L433.66 224.71 L431.17 225.42 L428.67 226.14 L426.17 226.86 L423.66 227.59 L421.16 228.32 L418.65 229.06 L416.15 229.81 L413.64 230.56 L411.13 231.32 L408.62 232.09 L406.12 232.86 L403.61 233.63 L401.11 234.42 L398.6 235.21 L396.1 236 L393.6 236.8 L391.1 237.6 L388.61 238.41 L386.11 239.23 L383.62 240.05 L381.14 240.88 L378.66 241.71 L376.18 242.54 L373.71 243.38 L371.24 244.23 L368.78 245.08 L366.32 245.93 L363.87 246.79 L361.42 247.66 L358.98 248.52M1446.22 249.4 L1445.82 250.27 L1445.42 251.15 L1445.01 252.04 L1444.59 252.93 L1444.16 253.82 L1443.73 254.72 L1443.29 255.62 L1442.84 256.52 L1442.37 257.43 L1441.9 258.34 L1441.43 259.26 L1440.94 260.18 L1440.44 261.1 L1439.93 262.02 L1439.41 262.95 L1438.88 263.88 L1438.34 264.82 L1437.79 265.76 L1437.23 266.7 L1436.65 267.64 L1436.07 268.59 L1435.47 269.54 L1434.87 270.49 L1434.25 271.44 L1433.62 272.4 L1432.97 273.36 L1432.32 274.33 L1431.65 275.29 L1430.97 276.26 L1430.28 277.23 L1429.57 278.2 L1428.85 279.17 L1428.12 280.15 L1427.38 281.13 L1426.62 282.11 L1425.85 283.09 L1425.06 284.08 L1424.26 285.06 L1423.45 286.05 L1422.63 287.04 L1421.79 288.03 L1420.93 289.03 L1420.07 290.02 L1419.18 291.02 L1418.29 292.02 L1417.38 293.02 L1416.46 294.02 L1415.52 295.02 L1414.57 296.02 L1413.6 297.03 L1412.62 298.03 L1411.62 299.04 L1410.61 300.05 L1409.59 301.06 L1408.55 302.07 L1407.49 303.08 L1406.42 304.09 L1405.34 305.1 L1404.24 306.12 L1403.13 307.13 L1402 308.15 L1400.86 309.16 L1399.71 310.18 L1398.53 311.19 L1397.35 312.21 L1396.15 313.23 L1394.93 314.25 L1393.7 315.26 L1392.46 316.28 L1391.2 317.3"/>
<path class="met" stroke="#4ec36b" d="M1391.2 317.3 L1390.77 317.61 L1390.34 317.92 L1389.91 318.23 L1389.47 318.54 L1389.04 318.85 L1388.6 319.15 L1388.16 319.46 L1387.73 319.77 L1387.28 320.08 L1386.84 320.39 L1386.4 320.7"/>
<path class="gc" stroke="#4ec36b" d="M455.5 218.5 L453.87 220.06 L452.27 221.62 L450.7 223.18 L449.16 224.74 L447.64 226.3 L446.16 227.86 L444.71 229.43 L443.3 230.99 L441.91 232.56 L440.55 234.13 L439.22 235.7 L437.93 237.27 L436.67 238.84 L435.44 240.41 L434.24 241.98 L433.07 243.55 L431.94 245.12 L430.84 246.7 L429.77 248.27 L428.74 249.85 L427.74 251.42 L426.77 253 L425.83 254.58 L424.93 256.16 L424.06 257.74 L423.22 259.31 L422.42 260.89 L421.66 262.47 L420.92 264.06 L420.22 265.64 L419.56 267.22 L418.93 268.8 L418.33 270.38 L417.77 271.97 L417.24 273.55 L416.75 275.13 L416.29 276.72 L415.87 278.3 L415.48 279.89 L415.13 281.47 L414.81 283.06 L414.52 284.65 L414.28 286.23 L414.06 287.82 L413.88 289.41 L413.74 290.99 L413.63 292.58 L413.56 294.17 L413.52 295.76 L413.52 297.34 L413.55 298.93 L413.62 300.52 L413.72 302.11 L413.86 303.7 L414.04 305.29 L414.25 306.88 L414.49 308.46 L414.77 310.05 L415.09 311.64 L415.44 313.23 L415.82 314.82 L416.24 316.41 L416.7 318"/>
<path class="met" stroke="#4ec36b" d="M416.7 318 L417.09 319.07 L417.5 320.15 L417.93 321.22 L418.37 322.29 L418.82 323.36 L419.3 324.44 L419.79 325.51 L420.29 326.58 L420.81 327.65 L421.35 328.73 L421.9 329.8"/>
<path class="gc" stroke="#25858e" d="M457.3 305.6 L455.65 306.21 L454.01 306.81 L452.38 307.42 L450.75 308.03 L449.12 308.64 L447.5 309.25 L445.88 309.86 L444.27 310.47 L442.66 311.08 L441.06 311.7 L439.46 312.31 L437.87 312.93 L436.28 313.54 L434.7 314.16 L433.12 314.77 L431.55 315.39 L429.98 316 L428.42 316.62 L426.86 317.24 L425.31 317.85 L423.76 318.47 L422.22 319.09 L420.68 319.71 L419.15 320.32 L417.62 320.94 L416.1 321.56 L414.59 322.17 L413.08 322.79 L411.57 323.41 L410.07 324.03 L408.58 324.64 L407.09 325.26 L405.61 325.87 L404.13 326.49 L402.66 327.1 L401.19 327.72 L399.73 328.33 L398.27 328.95 L396.82 329.56 L395.37 330.17 L393.93 330.78 L392.5 331.4 L391.07 332.01 L389.64 332.62 L388.22 333.22 L386.81 333.83 L385.4 334.44 L384 335.04 L382.6 335.65 L381.21 336.25 L379.82 336.86 L378.44 337.46 L377.06 338.06 L375.69 338.66 L374.32 339.26 L372.96 339.85 L371.6 340.45 L370.25 341.04 L368.9 341.63 L367.56 342.23 L366.22 342.82 L364.89 343.4 L363.56 343.99 L362.24 344.58 L360.92 345.16 L359.6 345.74 L358.29 346.32 L356.99 346.9 L355.69 347.47 L354.39 348.05 L353.1 348.62 L351.81 349.19 L350.53 349.76 L349.25 350.33 L347.97 350.89 L346.7 351.45 L345.44 352.01 L344.17 352.57 L342.91 353.13 L341.66 353.68 L340.4 354.23 L339.16 354.78 L337.91 355.33 L336.67 355.87 L335.43 356.41 L334.19 356.95 L332.96 357.49 L331.73 358.02 L330.51 358.55 L329.28 359.08M1475.41 359.6 L1473.5 360.13 L1471.59 360.65 L1469.68 361.16 L1467.76 361.68 L1465.84 362.19 L1463.92 362.7 L1462 363.2"/>
<path class="met" stroke="#25858e" d="M1462 363.2 L1461.36 363.34 L1460.73 363.48 L1460.09 363.61 L1459.46 363.75 L1458.82 363.89 L1458.18 364.02 L1457.55 364.16 L1456.91 364.3 L1456.27 364.43 L1455.64 364.57 L1455 364.7"/>
<path class="gc" stroke="#2ab07f" d="M1431.4 360.4 L1432.92 358.79 L1434.41 357.19 L1435.85 355.58 L1437.25 353.98 L1438.62 352.37 L1439.95 350.76 L1441.23 349.15 L1442.48 347.55 L1443.68 345.94 L1444.85 344.33 L1445.98 342.72 L1447.06 341.11 L1448.11 339.5 L1449.11 337.9 L1450.08 336.29 L1451 334.68 L1451.88 333.07 L1452.72 331.46 L1453.53 329.85 L1454.29 328.24 L1455.01 326.63 L1455.68 325.02 L1456.32 323.41 L1456.92 321.8 L1457.47 320.19 L1457.98 318.58 L1458.46 316.97 L1458.89 315.36 L1459.28 313.75 L1459.62 312.14 L1459.93 310.53 L1460.19 308.92 L1460.42 307.31 L1460.6 305.7 L1460.74 304.1 L1460.84 302.49 L1460.9 300.88 L1460.91 299.27 L1460.89 297.66 L1460.82 296.05 L1460.71 294.44 L1460.56 292.84 L1460.37 291.23 L1460.14 289.62 L1459.87 288.01 L1459.56 286.41 L1459.2 284.8"/>
<path class="met" stroke="#2ab07f" d="M1459.2 284.8 L1458.95 283.51 L1458.67 282.22 L1458.37 280.92 L1458.04 279.63 L1457.69 278.34 L1457.3 277.05 L1456.9 275.76 L1456.46 274.47 L1456 273.18 L1455.51 271.89 L1455 270.6"/>
<path class="met" stroke="#6a6a6a" d="M440 241.7 L438.59 244.4 L437.27 247.11 L436.05 249.83 L434.91 252.55 L433.88 255.27 L432.94 258 L432.09 260.73 L431.35 263.47 L430.7 266.21 L430.15 268.95 L429.7 271.7"/>
<path class="met" stroke="#6a6a6a" d="M403.3 296.7 L405.2 296.58 L407.11 296.46 L409.01 296.34 L410.91 296.23 L412.81 296.12 L414.71 296.01 L416.61 295.9 L418.51 295.8 L420.41 295.7 L422.3 295.6 L424.2 295.5"/>
<path class="met" stroke="#6a6a6a" d="M495.8 238.3 L496.17 238.97 L496.54 239.64 L496.91 240.31 L497.29 240.99 L497.67 241.67 L498.05 242.35 L498.43 243.04 L498.82 243.72 L499.21 244.41 L499.6 245.11 L500 245.8"/>
<path class="met" stroke="#6a6a6a" d="M558.3 258.3 L558.75 258.07 L559.21 257.84 L559.66 257.62 L560.11 257.39 L560.57 257.16 L561.02 256.93 L561.48 256.71 L561.93 256.48 L562.39 256.25 L562.84 256.03 L563.3 255.8"/>
<path class="met" stroke="#6a6a6a" d="M450.9 303.3 L450.68 305.85 L450.54 308.41 L450.49 310.96 L450.52 313.52 L450.63 316.07 L450.83 318.63 L451.12 321.18 L451.49 323.74 L451.94 326.29 L452.48 328.85 L453.1 331.4"/>
<path class="met" stroke="#6a6a6a" d="M435.1 312.7 L434.19 313.28 L433.28 313.86 L432.37 314.44 L431.47 315.03 L430.58 315.61 L429.69 316.19 L428.8 316.77 L427.92 317.35 L427.04 317.94 L426.17 318.52 L425.3 319.1"/>
<path class="met" stroke="#6a6a6a" d="M664.5 300.8 L656.28 302.31 L648.06 303.86 L639.87 305.44 L631.68 307.05 L623.52 308.68 L615.38 310.33 L607.25 312 L599.15 313.68 L591.08 315.38 L583.02 317.09 L575 318.8"/>
<path class="met" stroke="#6a6a6a" d="M387.3 361.7 L387.9 362.06 L388.5 362.43 L389.11 362.79 L389.71 363.16 L390.32 363.52 L390.93 363.88 L391.54 364.25 L392.15 364.61 L392.77 364.97 L393.38 365.34 L394 365.7"/>
<path class="met" stroke="#6a6a6a" d="M718.3 251.3 L718.7 252.31 L719.11 253.33 L719.52 254.34 L719.94 255.36 L720.36 256.37 L720.79 257.39 L721.22 258.41 L721.66 259.43 L722.1 260.45 L722.55 261.48 L723 262.5"/>
<path class="met" stroke="#6a6a6a" d="M839.5 257 L840.53 257.56 L841.55 258.13 L842.58 258.69 L843.6 259.26 L844.63 259.83 L845.66 260.4 L846.69 260.98 L847.71 261.56 L848.74 262.14 L849.77 262.72 L850.8 263.3"/>
<path class="met" stroke="#6a6a6a" d="M616 366.7 L616.41 367.3 L616.83 367.9 L617.25 368.5 L617.67 369.1 L618.09 369.7 L618.52 370.3 L618.95 370.9 L619.38 371.5 L619.82 372.1 L620.26 372.7 L620.7 373.3"/>
<path class="met" stroke="#6a6a6a" d="M1405.3 256.4 L1407.23 259.15 L1409.06 261.9 L1410.77 264.66 L1412.38 267.41 L1413.87 270.16 L1415.26 272.92 L1416.53 275.67 L1417.69 278.43 L1418.74 281.19 L1419.68 283.94 L1420.5 286.7"/>
<path class="met" stroke="#6a6a6a" d="M1466.7 279.5 L1466.9 280.33 L1467.09 281.15 L1467.27 281.98 L1467.44 282.81 L1467.59 283.63 L1467.74 284.46 L1467.87 285.29 L1468 286.12 L1468.11 286.94 L1468.21 287.77 L1468.3 288.6"/>
<path class="met" stroke="#6a6a6a" d="M1431.4 239.7 L1431.18 239.82 L1430.96 239.93 L1430.74 240.05 L1430.52 240.17 L1430.31 240.29 L1430.09 240.4 L1429.87 240.52 L1429.65 240.64 L1429.43 240.76 L1429.22 240.88 L1429 241"/>
<path class="met" stroke="#6a6a6a" d="M1478 351.8 L1478.11 351.98 L1478.22 352.16 L1478.33 352.35 L1478.44 352.53 L1478.55 352.71 L1478.66 352.89 L1478.77 353.07 L1478.88 353.26 L1478.99 353.44 L1479.09 353.62 L1479.2 353.8"/>
<circle cx="527" cy="294.6" r="1.25" fill="#ff7043"/>
<circle cx="327" cy="320.6" r="1.25" fill="#ff7043"/>
<circle cx="1386.4" cy="320.7" r="1.25" fill="#ff7043"/>
<circle cx="421.9" cy="329.8" r="1.25" fill="#ff7043"/>
<circle cx="1455" cy="364.7" r="1.25" fill="#ff7043"/>
<circle cx="1455" cy="270.6" r="1.25" fill="#ff7043"/>
<path d="M456.95 215.6h6.9M460.4 212.15v6.9M449.05 220h6.9M452.5 216.55v6.9M450.05 219.3h6.9M453.5 215.85v6.9M452.05 218.5h6.9M455.5 215.05v6.9M453.85 305.6h6.9M457.3 302.15v6.9M1427.95 360.4h6.9M1431.4 356.95v6.9" fill="none" stroke="#f00" stroke-width="1.389"/>
<text class="sl" x="452.4" y="222.25">COM</text>
<text class="sl" x="460.4" y="323.15">HYD</text>
<text class="sl" x="1430.8" y="361.05">XVI</text>
</g>
<g id="info">
<text class="mono" x="315.2" y="29.8" xml:space="preserve">UK0049</text>
<text class="mono" x="315.2" y="42.9" xml:space="preserve">Beg: 20251218 22:17:48 (sol = 266.89°)</text>
<text class="mono" x="315.2" y="56.5" xml:space="preserve">End: 20251219 07:02:17 (sol = 267.26°)</text>
<text class="mono" x="315.2" y="68.9" xml:space="preserve">--------------------------------------</text>
<text class="mono" x="315.2" y="81.7" xml:space="preserve">...: 15</text>
<text class="mono" x="315.2" y="94.8" xml:space="preserve">COM: 4</text>
<text class="mono" x="315.2" y="107.9" xml:space="preserve">HYD: 1</text>
<text class="mono" x="315.2" y="121.8" xml:space="preserve">XVI: 1</text>
</g>
<g id="activity">
<text class="mon" transform="translate(149 696.63) rotate(-90) scale(0.963 1.03)">APR</text>
<text class="mon" transform="translate(294 701.13) rotate(-90) scale(0.963 1.03)">MAY</text>
<text class="mon" transform="translate(436 688.71) rotate(-90) scale(0.963 1.03)">JUN</text>
<text class="mon" transform="translate(576 684.04) rotate(-90) scale(0.963 1.03)">JUL</text>
<text class="mon" transform="translate(723.3 701.85) rotate(-90) scale(0.963 1.03)">AUG</text>
<text class="mon" transform="translate(872 694.76) rotate(-90) scale(0.963 1.03)">SEP</text>
<text class="mon" transform="translate(1016 700.77) rotate(-90) scale(0.963 1.03)">OCT</text>
<text class="mon" transform="translate(1169 704.29) rotate(-90) scale(0.963 1.03)">NOV</text>
<text class="mon" transform="translate(1318 701.21) rotate(-90) scale(0.963 1.03)">DEC</text>
<text class="mon" transform="translate(1469 686.46) rotate(-90) scale(0.963 1.03)">JAN</text>
<text class="mon" transform="translate(1628.3 696.85) rotate(-90) scale(0.963 1.03)">FEB</text>
<text class="mon" transform="translate(1766.3 705.33) rotate(-90) scale(0.963 1.03)">MAR</text>
<path class="ml" d="M74 842.1 V641.5"/>
<path class="ml" d="M218 842.1 V641.5"/>
<path class="ml" d="M365 842.1 V641.5"/>
<path class="ml" d="M505 842.1 V641.5"/>
<path class="ml" d="M650 842.1 V641.5"/>
<path class="ml" d="M797 842.1 V641.5"/>
<path class="ml" d="M940 842.1 V641.5"/>
<path class="ml" d="M1091 842.1 V641.5"/>
<path class="ml" d="M1239 842.1 V641.5"/>
<path class="ml" d="M1394 842.1 V641.5"/>
<path class="ml" d="M1548 842.1 V641.5"/>
<path class="ml" d="M1687 842.1 V641.5"/>
<path d="M1328.5 842.1V641.5" fill="none" stroke="#f00" stroke-width="1.389" stroke-dasharray="5.139 2.222"/>
<path d="M1330.5 842.1V641.5" fill="none" stroke="#f00" stroke-width="1.389" stroke-dasharray="5.139 2.222"/>
<path class="bar" stroke="#bddf26" d="M106 834H129M165 834H345M366 834H625M635 834H786M807 834H899M920 834H973M984 834H1066M1082 834H1203M1244 834H1326M1337 834H1355M1381 834H1444M1459 834H1512M1523 834H1547M1724 834H1748M1758 834H1782"/>
<path class="bar" stroke="#81d34d" d="M165 818H188M223 818H286M312 818H340M366 818H492M508 818H654M704 818H737M773 818H845M871 818H988M1003 818H1017M1062 818H1213M1244 818H1267M1293 818H1316M1342 818H1365M1386 818H1429M1459 818H1483M1548 818H1571"/>
<path class="bar" stroke="#4ec36b" d="M165 802H188M258 802H487M508 802H615M626 802H718M729 802H826M949 802H1149M1160 802H1248M1258 802H1444M1459 802H1483M1552 802H1576"/>
<path class="bar" stroke="#2ab07f" d="M194 785H218M321 785H507M518 785H541M557 785H683M807 785H831M954 785H973M988 785H1125M1155 785H1218M1244 785H1267M1317 785H1341M1396 785H1419M1464 785H1650"/>
<path class="bar" stroke="#1e9b8a" d="M341 769H370M410 769H448M469 769H492M527 769H546M562 769H590M616 769H649M959 769H988M1062 769H1086M1101 769H1125M1160 769H1194M1248 769H1272M1425 769H1512"/>
<path class="bar" stroke="#25858e" d="M420 752H443M532 752H556M567 752H590M621 752H742M969 752H1135M1185 752H1346M1469 752H1493"/>
<path class="bar" stroke="#2d708e" d="M429 736H453M576 736H733M993 736H1105M1116 736H1223M1263 736H1292M1489 736H1512"/>
<path class="bar" stroke="#375a8c" d="M591 720H615M655 720H772M1072 720H1243M1263 720H1287"/>
<path class="bar" stroke="#424086" d="M596 703H733M1091 703H1120M1199 703H1223M1273 703H1326"/>
<path class="bar" stroke="#482475" d="M1111 687H1135"/>
<path class="pk" d="M113 834h8M117 830v8M241 834h8M245 830v8M511 834h8M515 830v8M707 834h8M711 830v8M833 834h8M837 830v8M962 834h8M966 830v8M986 834h8M990 830v8M1116 834h8M1120 830v8M1295 834h8M1299 830v8M1342 834h8M1346 830v8M1413 834h8M1417 830v8M1482 834h8M1486 830v8M1531 834h8M1535 830v8M1732 834h8M1736 830v8M1766 834h8M1770 830v8M172 818h8M176 814v8M256 818h8M260 814v8M323 818h8M327 814v8M437 818h8M441 814v8M599 818h8M603 814v8M717 818h8M721 814v8M793 818h8M797 814v8M939 818h8M943 814v8M1006 818h8M1010 814v8M1153 818h8M1157 814v8M1251 818h8M1255 814v8M1300 818h8M1304 814v8M1349 818h8M1353 814v8M1403 818h8M1407 814v8M1467 818h8M1471 814v8M1555 818h8M1559 814v8M174 802h8M178 798v8M378 802h8M382 798v8M545 802h8M549 798v8M682 802h8M686 798v8M741 802h8M745 798v8M1075 802h8M1079 798v8M1217 802h8M1221 798v8M1305 802h8M1309 798v8M1467 802h8M1471 798v8M1560 802h8M1564 798v8M202 785h8M206 781v8M400 785h8M404 781v8M525 785h8M529 781v8M639 785h8M643 781v8M815 785h8M819 781v8M959 785h8M963 781v8M1040 785h8M1044 781v8M1188 785h8M1192 781v8M1251 785h8M1255 781v8M1325 785h8M1329 781v8M1403 785h8M1407 781v8M1546 785h8M1550 781v8M356 769h8M360 765v8M426 769h8M430 765v8M476 769h8M480 765v8M535 769h8M539 765v8M571 769h8M575 765v8M631 769h8M635 765v8M974 769h8M978 765v8M1070 769h8M1074 765v8M1109 769h8M1113 765v8M1178 769h8M1182 765v8M1256 769h8M1260 765v8M1467 769h8M1471 765v8M427 752h8M431 748v8M540 752h8M544 748v8M574 752h8M578 748v8M704 752h8M708 748v8M1094 752h8M1098 748v8M1271 752h8M1275 748v8M1477 752h8M1481 748v8M437 736h8M441 732v8M631 736h8M635 732v8M1039 736h8M1043 732v8M1168 736h8M1172 732v8M1275 736h8M1279 732v8M1497 736h8M1501 732v8M599 720h8M603 716v8M727 720h8M731 716v8M1188 720h8M1192 716v8M1271 720h8M1275 716v8M687 703h8M691 699v8M1102 703h8M1106 699v8M1207 703h8M1211 699v8M1300 703h8M1304 699v8M1119 687h8M1123 683v8"/>
<text class="bl" x="117" y="832">KSE</text>
<text class="bl" x="254.8" y="832">ETA</text>
<text class="bl" x="494.4" y="832">NZC</text>
<text class="bl" x="710.6" y="832">NDA</text>
<text class="bl" x="853" y="832">SPE</text>
<text class="bl" x="945.4" y="832">ARD</text>
<text class="bl" x="1025" y="832">EGE</text>
<text class="bl" x="1142.4" y="832">NTA</text>
<text class="bl" x="1284" y="832">MON</text>
<text class="bl" x="1343.4" y="832">URS</text>
<text class="bl" x="1412" y="832">AHY</text>
<text class="bl" x="1485.6" y="832">GUM</text>
<text class="bl" x="1535" y="832">OHY</text>
<text class="bl" x="1736" y="832">XHE</text>
<text class="bl" x="1770" y="832">EVI</text>
<text class="bl" x="175.5" y="815">AVB</text>
<text class="bl" x="254.7" y="815">ELY</text>
<text class="bl" x="323.9" y="815">CAM</text>
<text class="bl" x="431.6" y="815">SSG</text>
<text class="bl" x="578.6" y="815">PCA</text>
<text class="bl" x="720.6" y="815">AUD</text>
<text class="bl" x="808.4" y="815">AUR</text>
<text class="bl" x="931" y="815">DSX</text>
<text class="bl" x="1009" y="815">OCU</text>
<text class="bl" x="1137" y="815">OER</text>
<text class="bl" x="1254.6" y="815">DKD</text>
<text class="bl" x="1304" y="815">DSV</text>
<text class="bl" x="1353" y="815">ALY</text>
<text class="bl" x="1407.4" y="815">JLE</text>
<text class="bl" x="1471.6" y="815">SCC</text>
<text class="bl" x="1559" y="815">FEV</text>
<text class="bl" x="176" y="799">LYR</text>
<text class="bl" x="372.6" y="799">JMC</text>
<text class="bl" x="559" y="799">JPE</text>
<text class="bl" x="671.4" y="799">PAU</text>
<text class="bl" x="774" y="799">NIA</text>
<text class="bl" x="1049.6" y="799">STA</text>
<text class="bl" x="1205.4" y="799">NOO</text>
<text class="bl" x="1353.4" y="799">COM</text>
<text class="bl" x="1470.6" y="799">NCC</text>
<text class="bl" x="1563.4" y="799">FED</text>
<text class="bl" x="205" y="783">HVI</text>
<text class="bl" x="412" y="783">ARI</text>
<text class="bl" x="529.6" y="783">SZC</text>
<text class="bl" x="617.4" y="783">CAP</text>
<text class="bl" x="818.4" y="783">NUE</text>
<text class="bl" x="961" y="783">OCT</text>
<text class="bl" x="1059" y="783">ORI</text>
<text class="bl" x="1186.4" y="783">AMO</text>
<text class="bl" x="1255" y="783">DPC</text>
<text class="bl" x="1328.6" y="783">XVI</text>
<text class="bl" x="1407.6" y="783">QUA</text>
<text class="bl" x="1559.4" y="783">AAN</text>
<text class="bl" x="353" y="766">TAH</text>
<text class="bl" x="431.4" y="766">JEA</text>
<text class="bl" x="480" y="766">JIP</text>
<text class="bl" x="538.6" y="766">PPS</text>
<text class="bl" x="578.6" y="766">ZCS</text>
<text class="bl" x="632.6" y="766">GDR</text>
<text class="bl" x="970" y="766">DRA</text>
<text class="bl" x="1073" y="766">LUM</text>
<text class="bl" x="1112.6" y="766">RPU</text>
<text class="bl" x="1176.4" y="766">THA</text>
<text class="bl" x="1259.4" y="766">PSU</text>
<text class="bl" x="1470.6" y="766">XCB</text>
<text class="bl" x="431.4" y="750">JRC</text>
<text class="bl" x="544" y="750">CAN</text>
<text class="bl" x="578" y="750">FAN</text>
<text class="bl" x="681.4" y="750">PER</text>
<text class="bl" x="1049" y="750">CTA</text>
<text class="bl" x="1264" y="750">HYD</text>
<text class="bl" x="1481" y="750">XUM</text>
<text class="bl" x="441.4" y="734">COR</text>
<text class="bl" x="657" y="734">SDA</text>
<text class="bl" x="1049" y="734">LMI</text>
<text class="bl" x="1166.4" y="734">LEO</text>
<text class="bl" x="1274.4" y="734">EHY</text>
<text class="bl" x="1499.6" y="734">ECV</text>
<text class="bl" x="602.6" y="717">JXA</text>
<text class="bl" x="715" y="717">KCG</text>
<text class="bl" x="1156.4" y="717">AND</text>
<text class="bl" x="1274.6" y="717">DAD</text>
<text class="bl" x="666.4" y="701">ERI</text>
<text class="bl" x="1108" y="701">SLD</text>
<text class="bl" x="1211" y="701">ORS</text>
<text class="bl" x="1299" y="701">GEM</text>
<text class="bl" x="1122.6" y="684.5">KUM</text>
<rect x="19.5" y="641.5" width="1766" height="201" fill="none" stroke="#fff" stroke-width="1"/>
<text class="tk" x="19.35" y="862.2">0</text>
<text class="tk" x="264.63" y="862.2">50</text>
<text class="tk" x="509.91" y="862.2">100</text>
<text class="tk" x="755.19" y="862.2">150</text>
<text class="tk" x="1000.47" y="862.2">200</text>
<text class="tk" x="1245.75" y="862.2">250</text>
<text class="tk" x="1491.03" y="862.2">300</text>
<text class="tk" x="1736.31" y="862.2">350</text>
<path d="M19.5 843v4.9M265.5 843v4.9M510.5 843v4.9M755.5 843v4.9M1000.5 843v4.9M1246.5 843v4.9M1491.5 843v4.9M1736.5 843v4.9" fill="none" stroke="#fff" stroke-width="1"/>
<text class="tk" x="902.4" y="881.7">Solar longitude (deg)</text>
</g>
</svg></body></html>
